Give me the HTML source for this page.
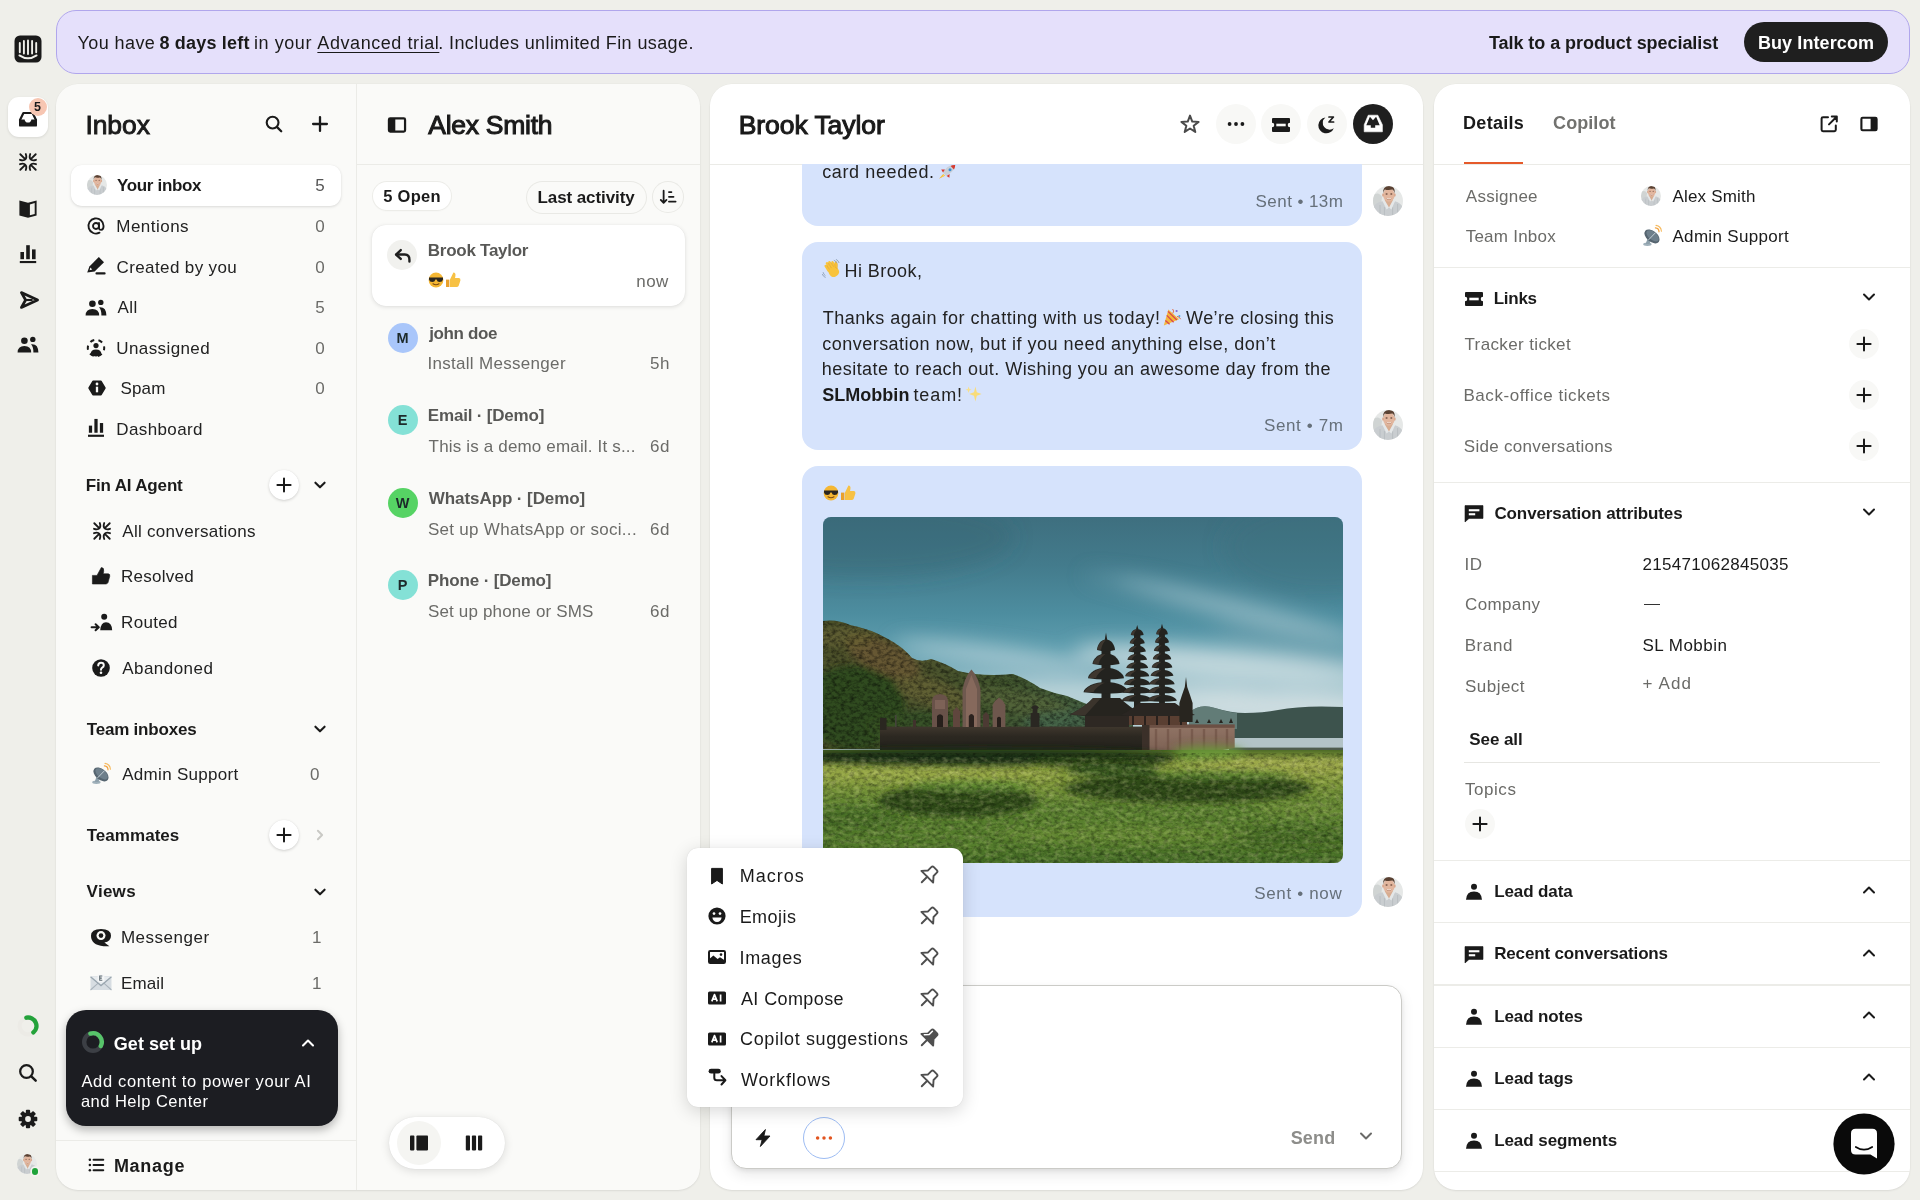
<!DOCTYPE html>
<html lang="en"><head><meta charset="utf-8"><title>Inbox</title>
<style>
html,body{margin:0;padding:0}
body{width:1920px;height:1200px;overflow:hidden;background:#efefea;font-family:"Liberation Sans",sans-serif;position:relative;color:#1a1a1a}
.a{position:absolute;display:block;overflow:visible}
.t{position:absolute;white-space:nowrap;line-height:24px;height:24px}
u{text-decoration-thickness:1.3px;text-underline-offset:2.5px}
svg.a{overflow:hidden}
#root{position:absolute;left:0;top:0;width:1920px;height:1200px;will-change:transform}
</style></head>
<body>
<div id="root">
<div class="a" style="left:55.6px;top:9.8px;width:1854.4px;height:63.8px;background:#e5e0fb;border-radius:20px;border:1.7px solid #b0a6ec;box-sizing:border-box"></div>
<div class="t" style="left:77.51px;top:31px;font-size:18px;letter-spacing:0.422px;">You have</div>
<div class="t" style="left:159.41px;top:31px;font-size:18px;font-weight:700;letter-spacing:0.204px;">8 days left</div>
<div class="t" style="left:253.89px;top:31px;font-size:18px;letter-spacing:0.586px;">in your</div>
<div class="t" style="left:317.37px;top:31px;font-size:18px;letter-spacing:0.565px;"><u>Advanced trial</u></div>
<div class="t" style="left:438.21px;top:31px;font-size:18px;letter-spacing:0.404px;">. Includes unlimited Fin usage.</div>
<div class="t" style="left:1488.89px;top:31px;font-size:18px;font-weight:700;letter-spacing:-0.051px;">Talk to a product specialist</div>
<div class="a" style="left:1744px;top:22px;width:144px;height:40px;background:#1f1f1f;border-radius:20px;"></div>
<div class="t" style="left:1757.89px;top:31px;font-size:18px;font-weight:700;color:#fff;letter-spacing:0.101px;">Buy Intercom</div>
<svg class="a" style="left:14.00px;top:35.00px" width="28" height="28" viewBox="-14.000 -14.000 28.000 28.000" ><rect x="-13.5" y="-13.5" width="27" height="27" rx="5.5" fill="#1a1a1a"/><path d="M-8.2 -6V3.2M-4.1 -8V4.6M0 -8.6V5M4.1 -8V4.6M8.2 -6V3.2" stroke="#efefea" stroke-width="1.9" stroke-linecap="round"/><path d="M-8.6 6.4Q0 12.2 8.6 6.4" stroke="#efefea" stroke-width="1.9" fill="none" stroke-linecap="round"/></svg>
<div class="a" style="left:8px;top:97px;width:40px;height:40px;background:#fff;border-radius:11px;box-shadow:0 1px 3px rgba(0,0,0,.10)"></div>
<svg class="a" style="left:16.50px;top:108.50px" width="22" height="20" viewBox="-11.000 -10.000 22.000 20.000" ><path d="M-8 1L-4.6 -6H4.6L8 1" stroke="#1a1a1a" stroke-width="2.2" fill="none" stroke-linejoin="round" stroke-linecap="round"/><path d="M-9 0.5H-3.4Q-3 3.6 0 3.6Q3 3.6 3.4 0.5H9V6.4Q9 7.6 7.8 7.6H-7.8Q-9 7.6 -9 6.4Z" fill="#1a1a1a"/></svg>
<div class="a" style="left:29px;top:98px;width:18px;height:18px;background:#f7c6b2;border-radius:9px;"></div>
<div class="t" style="left:33.97px;top:95px;font-size:12.5px;font-weight:700;">5</div>
<svg class="a" style="left:17.00px;top:151.20px" width="22" height="22" viewBox="-11.828 -11.828 23.656 23.656" ><path d="M8.3 8.3L3.0 3.0M2.4 8.6Q0.9 4.4 3.2 2.7M8.6 2.4Q4.4 0.9 2.7 3.2M8.3 -8.3L3.0 -3.0M2.4 -8.6Q0.9 -4.4 3.2 -2.7M8.6 -2.4Q4.4 -0.9 2.7 -3.2M-8.3 8.3L-3.0 3.0M-2.4 8.6Q-0.9 4.4 -3.2 2.7M-8.6 2.4Q-4.4 0.9 -2.7 3.2M-8.3 -8.3L-3.0 -3.0M-2.4 -8.6Q-0.9 -4.4 -3.2 -2.7M-8.6 -2.4Q-4.4 -0.9 -2.7 -3.2" stroke="#1a1a1a" stroke-width="2.0" fill="none" stroke-linecap="round" stroke-linejoin="round"/></svg>
<svg class="a" style="left:17.00px;top:197.50px" width="22" height="22" viewBox="-11.000 -11.000 22.000 22.000" ><path d="M0 -6.2L8.6 -8.6V6.4L0 8.8Z" fill="#1a1a1a"/><path d="M0 -6.2L-8.6 -8.6V6.4L0 8.8Z" fill="#1a1a1a"/><path d="M1.9 -4.6L6.7 -6V4.9L1.9 6.3Z" fill="#efefea"/></svg>
<svg class="a" style="left:17.00px;top:243.00px" width="22" height="22" viewBox="-11.000 -11.000 22.000 22.000" ><rect x="-7.6" y="-2" width="3.6" height="7.2" fill="#1a1a1a"/><rect x="-1.8" y="-8.8" width="3.6" height="14" fill="#1a1a1a"/><rect x="4" y="-4.6" width="3.6" height="9.8" fill="#1a1a1a"/><rect x="-8.2" y="7" width="16.4" height="2.1" fill="#1a1a1a"/></svg>
<svg class="a" style="left:17.50px;top:288.50px" width="22" height="22" viewBox="-11.000 -11.000 22.000 22.000" ><path d="M-7.6 -7.4L8.6 0L-7.6 7.4L-3.4 0Z" stroke="#1a1a1a" stroke-width="2.7" fill="none" stroke-linejoin="round"/><path d="M-3 0H3.6" stroke="#1a1a1a" stroke-width="2.1"/></svg>
<svg class="a" style="left:16.00px;top:335.00px" width="24" height="20" viewBox="-12.000 -10.000 24.000 20.000" ><circle cx="-3.6" cy="-4.2" r="3.3" fill="#1a1a1a"/><path d="M-10.4 7.6Q-10.4 1 -3.6 1Q3.2 1 3.2 7.6Z" fill="#1a1a1a"/><circle cx="4.8" cy="-5.6" r="2.7" fill="#1a1a1a"/><path d="M3 -0.8Q10.4 -1.6 10.4 7.6H5.4Q5.6 2 3 -0.8Z" fill="#1a1a1a"/></svg>
<svg class="a" style="left:15.40px;top:1013.00px" width="26" height="26" viewBox="-13.000 -13.000 26.000 26.000" ><circle r="8.4" stroke="#ecebe6" stroke-width="4.2" fill="none"/><path d="M-1.6 -8.3A8.4 8.4 0 0 1 5.4 6.4" stroke="#23a23a" stroke-width="4.4" fill="none" stroke-linecap="round"/></svg>
<svg class="a" style="left:16.90px;top:1062.20px" width="22" height="22" viewBox="-10.280 -10.280 20.561 20.561" ><circle cx="-1.4" cy="-1.4" r="5.9" stroke="#1a1a1a" stroke-width="2.1" fill="none"/><path d="M3.1 3.1L7.2 7.2" stroke="#1a1a1a" stroke-width="2.3" stroke-linecap="round"/></svg>
<svg class="a" style="left:16.90px;top:1108.20px" width="22" height="22" viewBox="-11.828 -11.828 23.656 23.656" ><rect x="-2.3" y="-10" width="4.6" height="5" rx="1" transform="rotate(0)" fill="#1a1a1a"/><rect x="-2.3" y="-10" width="4.6" height="5" rx="1" transform="rotate(45)" fill="#1a1a1a"/><rect x="-2.3" y="-10" width="4.6" height="5" rx="1" transform="rotate(90)" fill="#1a1a1a"/><rect x="-2.3" y="-10" width="4.6" height="5" rx="1" transform="rotate(135)" fill="#1a1a1a"/><rect x="-2.3" y="-10" width="4.6" height="5" rx="1" transform="rotate(180)" fill="#1a1a1a"/><rect x="-2.3" y="-10" width="4.6" height="5" rx="1" transform="rotate(225)" fill="#1a1a1a"/><rect x="-2.3" y="-10" width="4.6" height="5" rx="1" transform="rotate(270)" fill="#1a1a1a"/><rect x="-2.3" y="-10" width="4.6" height="5" rx="1" transform="rotate(315)" fill="#1a1a1a"/><circle r="7.2" fill="#1a1a1a"/><circle r="3.1" fill="#efefea"/></svg>
<svg class="a" style="left:17.40px;top:1154.20px" width="20" height="20" viewBox="-10.000 -10.000 20.000 20.000" ><defs><clipPath id="fa0"><circle r="10"/></clipPath></defs><g clip-path="url(#fa0)"><g transform="scale(0.6666666666666666)"><rect x="-15" y="-15" width="30" height="30" fill="#e6e8e7"/><path d="M-15 -6Q-9 -10 -6 -4L-7 4L-15 8Z" fill="#d0d4d3"/><path d="M-15 16V6Q-12 1.4 -5.4 0.2L1 6.4L7 0.2Q13 1.6 15 7V16Z" fill="#c9cdd0"/><path d="M-8 16V4M-3.6 16V6M4.6 16V6M9.6 16V3" stroke="#b4babd" stroke-width="1" opacity=".8"/><path d="M-3.4 -1.6H4.8L5.4 1.4L1 7L-3.6 1.4Z" fill="#d7ad92"/><path d="M-5.4 0.2L-3.4 -1L1 6.6L-1.4 8.4ZM7 0.2L5 -1L1 6.6L3.4 8.4Z" fill="#e4e7e8"/><ellipse cx="0.9" cy="-6" rx="5.7" ry="6.7" fill="#e2b69e"/><ellipse cx="-4.9" cy="-6" rx="1" ry="1.7" fill="#d9a88f"/><ellipse cx="6.7" cy="-6" rx="1" ry="1.7" fill="#d9a88f"/><path d="M-4.9 -7.4Q-5.6 -15 1.2 -15Q7.6 -15 6.7 -7.4Q6 -10.8 4.4 -11.4Q0 -10.4 -3.2 -11.6Q-4.4 -10.4 -4.9 -7.4Z" fill="#5a4132"/><ellipse cx="-1.4" cy="-7" rx="1.1" ry=".7" fill="#6a4a3c"/><ellipse cx="3.3" cy="-7" rx="1.1" ry=".7" fill="#6a4a3c"/><path d="M-1.9 -3Q1 -0.6 3.9 -3Q3.2 -1 1 -0.9Q-1.2 -1 -1.9 -3Z" fill="#b78570"/><path d="M-1.2 -2.7Q1 -1.6 3.2 -2.7" stroke="#f3e6df" stroke-width=".7" fill="none"/></g></g></svg>
<div class="a" style="left:31.900000000000002px;top:1168.3px;width:6.6px;height:6.6px;background:#1fa33a;border-radius:3.3px;box-shadow:0 0 0 1.7px #f4f4f0"></div>
<div class="a" style="left:56px;top:84px;width:643.6px;height:1106px;background:#fafaf8;border-radius:22px;box-shadow:0 1px 2px rgba(0,0,0,.08),0 0 0 .5px rgba(0,0,0,.03)"></div>
<div class="a" style="left:355.5px;top:84px;width:1px;height:1106px;background:#ebebe7;border-radius:0px;"></div>
<div class="a" style="left:356px;top:163.5px;width:344px;height:1px;background:#ebebe7;border-radius:0px;"></div>
<div class="t" style="left:85.45px;top:113px;font-size:26.5px;font-weight:500;letter-spacing:-0.086px;-webkit-text-stroke:.9px #1a1a1a;">Inbox</div>
<svg class="a" style="left:263.40px;top:113.40px" width="22" height="22" viewBox="-11.000 -11.000 22.000 22.000" ><circle cx="-1.4" cy="-1.4" r="5.9" stroke="#1a1a1a" stroke-width="2.1" fill="none"/><path d="M3.1 3.1L7.2 7.2" stroke="#1a1a1a" stroke-width="2.3" stroke-linecap="round"/></svg>
<svg class="a" style="left:309.00px;top:113.20px" width="22" height="22" viewBox="-11.000 -11.000 22.000 22.000" ><path d="M-6.9 0H6.9M0 -6.9V6.9" stroke="#1a1a1a" stroke-width="2.3" fill="none" stroke-linecap="round"/></svg>
<div class="a" style="left:71px;top:164.5px;width:269.5px;height:41px;background:#fff;border-radius:11px;box-shadow:0 1px 3px rgba(0,0,0,.13),0 0 1px rgba(0,0,0,.08)"></div>
<svg class="a" style="left:86.50px;top:175.30px" width="20" height="20" viewBox="-10.000 -10.000 20.000 20.000" ><defs><clipPath id="fa1"><circle r="10"/></clipPath></defs><g clip-path="url(#fa1)"><g transform="scale(0.6666666666666666)"><rect x="-15" y="-15" width="30" height="30" fill="#e6e8e7"/><path d="M-15 -6Q-9 -10 -6 -4L-7 4L-15 8Z" fill="#d0d4d3"/><path d="M-15 16V6Q-12 1.4 -5.4 0.2L1 6.4L7 0.2Q13 1.6 15 7V16Z" fill="#c9cdd0"/><path d="M-8 16V4M-3.6 16V6M4.6 16V6M9.6 16V3" stroke="#b4babd" stroke-width="1" opacity=".8"/><path d="M-3.4 -1.6H4.8L5.4 1.4L1 7L-3.6 1.4Z" fill="#d7ad92"/><path d="M-5.4 0.2L-3.4 -1L1 6.6L-1.4 8.4ZM7 0.2L5 -1L1 6.6L3.4 8.4Z" fill="#e4e7e8"/><ellipse cx="0.9" cy="-6" rx="5.7" ry="6.7" fill="#e2b69e"/><ellipse cx="-4.9" cy="-6" rx="1" ry="1.7" fill="#d9a88f"/><ellipse cx="6.7" cy="-6" rx="1" ry="1.7" fill="#d9a88f"/><path d="M-4.9 -7.4Q-5.6 -15 1.2 -15Q7.6 -15 6.7 -7.4Q6 -10.8 4.4 -11.4Q0 -10.4 -3.2 -11.6Q-4.4 -10.4 -4.9 -7.4Z" fill="#5a4132"/><ellipse cx="-1.4" cy="-7" rx="1.1" ry=".7" fill="#6a4a3c"/><ellipse cx="3.3" cy="-7" rx="1.1" ry=".7" fill="#6a4a3c"/><path d="M-1.9 -3Q1 -0.6 3.9 -3Q3.2 -1 1 -0.9Q-1.2 -1 -1.9 -3Z" fill="#b78570"/><path d="M-1.2 -2.7Q1 -1.6 3.2 -2.7" stroke="#f3e6df" stroke-width=".7" fill="none"/></g></g></svg>
<div class="t" style="left:117.06px;top:174px;font-size:17px;font-weight:700;letter-spacing:-0.340px;">Your inbox</div>
<div class="t" style="right:1595.40px;top:174px;font-size:17px;color:#555;">5</div>
<div class="t" style="left:116.29px;top:215px;font-size:17px;color:#222;letter-spacing:0.474px;">Mentions</div>
<div class="t" style="right:1595.40px;top:215px;font-size:17px;color:#6b6b68;">0</div>
<div class="t" style="left:116.60px;top:256px;font-size:17px;color:#222;letter-spacing:0.377px;">Created by you</div>
<div class="t" style="right:1595.40px;top:256px;font-size:17px;color:#6b6b68;">0</div>
<div class="t" style="left:117.46px;top:296px;font-size:17px;color:#222;letter-spacing:0.413px;">All</div>
<div class="t" style="right:1595.40px;top:296px;font-size:17px;color:#6b6b68;">5</div>
<div class="t" style="left:116.37px;top:337px;font-size:17px;color:#222;letter-spacing:0.388px;">Unassigned</div>
<div class="t" style="right:1595.40px;top:337px;font-size:17px;color:#6b6b68;">0</div>
<div class="t" style="left:120.50px;top:377px;font-size:17px;color:#222;letter-spacing:0.154px;">Spam</div>
<div class="t" style="right:1595.40px;top:377px;font-size:17px;color:#6b6b68;">0</div>
<div class="t" style="left:116.29px;top:418px;font-size:17px;color:#222;letter-spacing:0.377px;">Dashboard</div>
<svg class="a" style="left:85.40px;top:214.80px" width="22" height="22" viewBox="-12.500 -12.500 25.000 25.000" ><circle r="3.4" stroke="#1a1a1a" stroke-width="2.1" fill="none"/><path d="M3.4 -3.6V2Q3.4 4.4 5.8 4.4Q8.6 4.4 8.6 0A8.6 8.6 0 1 0 4 7.6" stroke="#1a1a1a" stroke-width="2.1" fill="none" stroke-linecap="round"/></svg>
<svg class="a" style="left:85.30px;top:255.00px" width="22" height="22" viewBox="-11.000 -11.000 22.000 22.000" ><path d="M-8.8 6.6L-6.6 0.4L2.8 -9L8 -3.8L-1.4 5.6Z" fill="#1a1a1a"/><path d="M-5.6 1.6L-6.4 4.2L-3.8 3.4Z" fill="#fafaf8"/><path d="M0.5 7.4H8.6" stroke="#1a1a1a" stroke-width="2.1" stroke-linecap="round"/></svg>
<svg class="a" style="left:84.30px;top:297.60px" width="24" height="20" viewBox="-12.000 -10.000 24.000 20.000" ><circle cx="-3.6" cy="-4.2" r="3.3" fill="#1a1a1a"/><path d="M-10.4 7.6Q-10.4 1 -3.6 1Q3.2 1 3.2 7.6Z" fill="#1a1a1a"/><circle cx="4.8" cy="-5.6" r="2.7" fill="#1a1a1a"/><path d="M3 -0.8Q10.4 -1.6 10.4 7.6H5.4Q5.6 2 3 -0.8Z" fill="#1a1a1a"/></svg>
<svg class="a" style="left:85.30px;top:336.80px" width="22" height="22" viewBox="-11.000 -11.000 22.000 22.000" ><circle r="8.2" stroke="#1a1a1a" stroke-width="2" fill="none" stroke-dasharray="4.3 4.3" stroke-dashoffset="2.1"/><circle cx="0" cy="-2.4" r="2.6" fill="#1a1a1a"/><path d="M-5.4 6.6Q-5.4 1.6 0 1.6Q5.4 1.6 5.4 6.6Q0 10.4 -5.4 6.6Z" fill="#1a1a1a"/></svg>
<svg class="a" style="left:85.60px;top:376.60px" width="22" height="22" viewBox="-11.000 -11.000 22.000 22.000" ><path d="M-4 -6.6H4L7.9 0L4 6.6H-4L-7.9 0Z" fill="#1a1a1a" stroke="#1a1a1a" stroke-width="1.6" stroke-linejoin="round"/><rect x="-1.15" y="-1.3" width="2.3" height="5.6" fill="#fafaf8"/><circle cx="0" cy="-4" r="1.4" fill="#fafaf8"/></svg>
<svg class="a" style="left:85.40px;top:416.80px" width="22" height="22" viewBox="-10.185 -10.185 20.370 20.370" ><rect x="-6.6" y="-2.2" width="3" height="6.6" fill="#1a1a1a"/><rect x="-1.5" y="-8.4" width="3" height="12.8" fill="#1a1a1a"/><rect x="3.6" y="-4.6" width="3" height="9" fill="#1a1a1a"/><rect x="-7.4" y="6.2" width="14.8" height="2" fill="#1a1a1a"/></svg>
<div class="t" style="left:85.77px;top:474px;font-size:17px;font-weight:700;letter-spacing:-0.168px;">Fin AI Agent</div>
<div class="a" style="left:269.2px;top:470px;width:30px;height:30px;background:#fff;border-radius:15px;box-shadow:0 1px 3px rgba(0,0,0,.16),0 0 1px rgba(0,0,0,.1)"></div>
<svg class="a" style="left:274.20px;top:475.00px" width="20" height="20" viewBox="-10.000 -10.000 20.000 20.000" ><path d="M-6.6 0H6.6M0 -6.6V6.6" stroke="#1a1a1a" stroke-width="2" fill="none" stroke-linecap="round"/></svg>
<svg class="a" style="left:311.80px;top:477.30px" width="16" height="16" viewBox="-8.000 -8.000 16.000 16.000" ><path d="M-4.6 -2.3L0 2.3L4.6 -2.3" stroke="#1a1a1a" stroke-width="2.1" fill="none" stroke-linecap="round" stroke-linejoin="round"/></svg>
<div class="t" style="left:122.26px;top:520px;font-size:17px;color:#222;letter-spacing:0.299px;">All conversations</div>
<div class="t" style="left:121.09px;top:565px;font-size:17px;color:#222;letter-spacing:0.242px;">Resolved</div>
<div class="t" style="left:121.09px;top:611px;font-size:17px;color:#222;letter-spacing:0.295px;">Routed</div>
<div class="t" style="left:122.26px;top:657px;font-size:17px;color:#222;letter-spacing:0.453px;">Abandoned</div>
<svg class="a" style="left:90.70px;top:519.80px" width="22" height="22" viewBox="-11.828 -11.828 23.656 23.656" ><path d="M8.3 8.3L3.0 3.0M2.4 8.6Q0.9 4.4 3.2 2.7M8.6 2.4Q4.4 0.9 2.7 3.2M8.3 -8.3L3.0 -3.0M2.4 -8.6Q0.9 -4.4 3.2 -2.7M8.6 -2.4Q4.4 -0.9 2.7 -3.2M-8.3 8.3L-3.0 3.0M-2.4 8.6Q-0.9 4.4 -3.2 2.7M-8.6 2.4Q-4.4 0.9 -2.7 3.2M-8.3 -8.3L-3.0 -3.0M-2.4 -8.6Q-0.9 -4.4 -3.2 -2.7M-8.6 -2.4Q-4.4 -0.9 -2.7 -3.2" stroke="#1a1a1a" stroke-width="2.0" fill="none" stroke-linecap="round" stroke-linejoin="round"/></svg>
<svg class="a" style="left:90.40px;top:565.00px" width="22" height="22" viewBox="-11.000 -11.000 22.000 22.000" ><path d="M-8.6 -0.6H-4L0.3 -8.5Q3.3 -8.4 2.7 -4.6L2.2 -2.2H7.2Q9.3 -2 8.7 0.5L7 6.6Q6.4 8 4.8 8H-8.6Z" fill="#1a1a1a" stroke="#1a1a1a" stroke-width=".6" stroke-linejoin="round"/></svg>
<svg class="a" style="left:89.70px;top:611.50px" width="24" height="22" viewBox="-12.000 -11.000 24.000 22.000" ><circle cx="2.2" cy="-6.3" r="3" fill="#1a1a1a"/><path d="M-1.8 7.2Q-1.2 -0.8 4 -0.8Q9.8 -0.8 10.2 7.2Z" fill="#1a1a1a"/><path d="M-10.4 4.2H-3.6M-6.4 1.2L-3.2 4.2L-6.4 7.2" stroke="#1a1a1a" stroke-width="2" fill="none" stroke-linecap="round" stroke-linejoin="round"/></svg>
<svg class="a" style="left:90.20px;top:657.00px" width="22" height="22" viewBox="-11.000 -11.000 22.000 22.000" ><circle r="8.8" fill="#1a1a1a"/><path d="M-2.8 -2.6Q-2.6 -5.2 0 -5.2Q2.8 -5.2 2.8 -2.8Q2.8 -1.2 1.2 -0.4Q0 0.3 0 1.8" stroke="#fafaf8" stroke-width="2" fill="none" stroke-linecap="round"/><circle cx="0" cy="4.8" r="1.3" fill="#fafaf8"/></svg>
<div class="t" style="left:86.71px;top:718px;font-size:17px;font-weight:700;letter-spacing:-0.198px;">Team inboxes</div>
<svg class="a" style="left:311.80px;top:721.10px" width="16" height="16" viewBox="-8.000 -8.000 16.000 16.000" ><path d="M-4.6 -2.3L0 2.3L4.6 -2.3" stroke="#1a1a1a" stroke-width="2.1" fill="none" stroke-linecap="round" stroke-linejoin="round"/></svg>
<svg class="a" style="left:89.20px;top:761.00px" width="24" height="26" viewBox="-12.000 -13.000 24.000 26.000" ><ellipse cx="-4.6" cy="8.2" rx="4.2" ry="1.7" fill="#9fb0ba"/><path d="M-6.4 8L-4.4 2.4L-1 4.6L-2.6 8Z" fill="#8ea0ab"/><ellipse cx="0" cy="0.4" rx="8.8" ry="5.4" transform="rotate(40 0 0.4)" fill="#55646f"/><ellipse cx="0.6" cy="-0.2" rx="7.4" ry="4" transform="rotate(40 0.6 -0.2)" fill="#6e7f8b"/><path d="M-3.2 3.6L3.6 -3.4" stroke="#c3ced5" stroke-width="1" stroke-linecap="round"/><path d="M3.4 -8.2A4 4 0 0 1 7 -4.2" stroke="#f2a03a" stroke-width="1.2" fill="none" stroke-linecap="round"/><path d="M4 -10.6A6.4 6.4 0 0 1 9.4 -4.8" stroke="#f6b95c" stroke-width="1.1" fill="none" stroke-linecap="round"/></svg>
<div class="t" style="left:122.26px;top:763px;font-size:17px;color:#222;letter-spacing:0.286px;">Admin Support</div>
<div class="t" style="left:309.92px;top:763px;font-size:17px;color:#6b6b68;">0</div>
<div class="t" style="left:86.71px;top:824px;font-size:17px;font-weight:700;letter-spacing:0.040px;">Teammates</div>
<div class="a" style="left:269.2px;top:820px;width:30px;height:30px;background:#fff;border-radius:15px;box-shadow:0 1px 3px rgba(0,0,0,.16),0 0 1px rgba(0,0,0,.1)"></div>
<svg class="a" style="left:274.20px;top:825.00px" width="20" height="20" viewBox="-10.000 -10.000 20.000 20.000" ><path d="M-6.6 0H6.6M0 -6.6V6.6" stroke="#1a1a1a" stroke-width="2" fill="none" stroke-linecap="round"/></svg>
<svg class="a" style="left:311.80px;top:827.00px" width="16" height="16" viewBox="-8.000 -8.000 16.000 16.000" ><path d="M-2.1 -4.2L2.1 0L-2.1 4.2" stroke="#c9c9c5" stroke-width="2" fill="none" stroke-linecap="round" stroke-linejoin="round"/></svg>
<div class="t" style="left:86.59px;top:880px;font-size:17px;font-weight:700;letter-spacing:0.279px;">Views</div>
<svg class="a" style="left:311.80px;top:883.50px" width="16" height="16" viewBox="-8.000 -8.000 16.000 16.000" ><path d="M-4.6 -2.3L0 2.3L4.6 -2.3" stroke="#1a1a1a" stroke-width="2.1" fill="none" stroke-linecap="round" stroke-linejoin="round"/></svg>
<svg class="a" style="left:89.20px;top:926.40px" width="24" height="22" viewBox="-12.000 -11.000 24.000 22.000" ><path d="M-10 -1.2Q-10 -8 0 -8Q10 -8 10 -1.2Q10 4.6 3.4 5.4L8.4 9.2H2.6Q-10 8 -10 -1.2Z" fill="#1a1a1a"/><circle cx="0" cy="-1.4" r="4.5" fill="#fafaf8"/><circle cx="0" cy="-1.4" r="2.3" fill="#1a1a1a"/></svg>
<div class="t" style="left:120.89px;top:926px;font-size:17px;color:#222;letter-spacing:0.518px;">Messenger</div>
<div class="t" style="left:311.99px;top:926px;font-size:17px;color:#6b6b68;">1</div>
<svg class="a" style="left:89.20px;top:972.60px" width="24" height="20" viewBox="-12.000 -10.000 24.000 20.000" ><rect x="-10.5" y="-6.8" width="21" height="13.8" rx="1.6" fill="#d7dde2"/><path d="M-10.5 7L-2 -0.6M10.5 7L2 -0.6" stroke="#aab4bc" stroke-width="1.1" fill="none"/><path d="M-10.5 -6.2L0 2.6L10.5 -6.2" stroke="#9aa6af" stroke-width="1.3" fill="#e8ecef"/><rect x="-3.3" y="-8.4" width="6.6" height="7.2" fill="#f4f6f7"/><path d="M1.3 -7H-1.3V-2.8H1.3M-1.3 -4.9H0.8" stroke="#5d6972" stroke-width="1.05" fill="none"/></svg>
<div class="t" style="left:120.89px;top:972px;font-size:17px;color:#222;letter-spacing:0.168px;">Email</div>
<div class="t" style="left:311.99px;top:972px;font-size:17px;color:#6b6b68;">1</div>
<div class="a" style="left:66px;top:1010.4px;width:271.6px;height:115.6px;background:#1c1d22;border-radius:20px;box-shadow:0 4px 10px rgba(0,0,0,.28)"></div>
<svg class="a" style="left:79.60px;top:1028.80px" width="26" height="26" viewBox="-13.000 -13.000 26.000 26.000" ><circle r="8.8" stroke="#3c3f45" stroke-width="4.4" fill="none"/><path d="M-2.6 -8.4A8.8 8.8 0 0 1 7.8 4" stroke="#57c46a" stroke-width="4.4" fill="none" stroke-linecap="round"/></svg>
<div class="t" style="left:113.87px;top:1032px;font-size:18px;font-weight:700;color:#fff;letter-spacing:0.012px;">Get set up</div>
<svg class="a" style="left:299.40px;top:1034.00px" width="18" height="18" viewBox="-9.000 -9.000 18.000 18.000" ><path d="M-5 2.5L0 -2.5L5 2.5" stroke="#fff" stroke-width="2.1" fill="none" stroke-linecap="round" stroke-linejoin="round"/></svg>
<div class="t" style="left:81.47px;top:1069px;font-size:16.5px;color:#fff;letter-spacing:0.644px;">Add content to power your AI</div>
<div class="t" style="left:80.89px;top:1089px;font-size:16.5px;color:#fff;letter-spacing:0.493px;">and Help Center</div>
<div class="a" style="left:56px;top:1139.5px;width:299.5px;height:1px;background:#ebebe7;border-radius:0px;"></div>
<svg class="a" style="left:85.20px;top:1155.00px" width="22" height="20" viewBox="-11.828 -10.753 23.656 21.505" ><circle cx="-6.6" cy="-5.6" r="1.35" fill="#1a1a1a"/><path d="M-2.6 -5.6H7.8" stroke="#1a1a1a" stroke-width="2.2" stroke-linecap="round"/><circle cx="-6.6" cy="0" r="1.35" fill="#1a1a1a"/><path d="M-2.6 0H7.8" stroke="#1a1a1a" stroke-width="2.2" stroke-linecap="round"/><circle cx="-6.6" cy="5.6" r="1.35" fill="#1a1a1a"/><path d="M-2.6 5.6H7.8" stroke="#1a1a1a" stroke-width="2.2" stroke-linecap="round"/></svg>
<div class="t" style="left:113.89px;top:1154px;font-size:18px;font-weight:700;letter-spacing:0.702px;">Manage</div>
<svg class="a" style="left:386.30px;top:114.60px" width="22" height="20" viewBox="-10.377 -9.434 20.755 18.868" ><rect x="-7.6" y="-6.2" width="15.2" height="12.4" rx="1.2" stroke="#1a1a1a" stroke-width="2.1" fill="none"/><rect x="-7.6" y="-6.2" width="6" height="12.4" fill="#1a1a1a"/></svg>
<div class="t" style="left:428.33px;top:113px;font-size:26.5px;letter-spacing:-0.276px;-webkit-text-stroke:1.05px #1a1a1a;">Alex Smith</div>
<div class="a" style="left:372.5px;top:181.5px;width:78.5px;height:28.5px;background:#fff;border-radius:15px;box-shadow:0 0 0 1px #ecece8,0 1px 2px rgba(0,0,0,.05)"></div>
<div class="t" style="left:383.17px;top:184px;font-size:16.5px;font-weight:700;letter-spacing:0.305px;">5 Open</div>
<div class="a" style="left:526.5px;top:181.5px;width:119px;height:31.5px;background:#fafaf8;border-radius:16px;box-shadow:0 0 0 1px #e9e9e5"></div>
<div class="t" style="left:537.57px;top:186px;font-size:17px;font-weight:700;letter-spacing:-0.097px;">Last activity</div>
<div class="a" style="left:653.2px;top:182.2px;width:29.6px;height:29.6px;background:#fafaf8;border-radius:14.8px;box-shadow:0 0 0 1px #e9e9e5"></div>
<svg class="a" style="left:658.00px;top:187.00px" width="20" height="20" viewBox="-10.526 -10.526 21.053 21.053" ><path d="M-4.6 -6.6V6M-7.6 3L-4.6 6.2L-1.6 3" stroke="#1a1a1a" stroke-width="1.9" fill="none" stroke-linecap="round" stroke-linejoin="round"/><path d="M1 -5.2H3.6M1 -0.2H5.8M1 4.8H8" stroke="#1a1a1a" stroke-width="1.9" stroke-linecap="round"/></svg>
<div class="a" style="left:371.5px;top:224.6px;width:313.2px;height:81.2px;background:#fff;border-radius:14px;box-shadow:0 1px 4px rgba(0,0,0,.12),0 0 1px rgba(0,0,0,.1)"></div>
<div class="a" style="left:387.3px;top:240.3px;width:30px;height:30px;background:#f1f1ee;border-radius:15px;"></div>
<svg class="a" style="left:392.90px;top:245.60px" width="20" height="20" viewBox="-10.870 -10.870 21.739 21.739" ><path d="M-2.4 -6.4L-7.6 -1.6L-2.4 3.2" stroke="#1f1f1f" stroke-width="2.6" fill="none" stroke-linecap="round" stroke-linejoin="round"/><path d="M-7 -1.6H2Q7 -1.6 7 4.2V6" stroke="#1f1f1f" stroke-width="2.6" fill="none" stroke-linecap="round"/></svg>
<div class="t" style="left:427.87px;top:239px;font-size:17px;font-weight:700;color:#585856;letter-spacing:-0.270px;">Brook Taylor</div>
<div class="t" style="left:636.21px;top:270px;font-size:17px;color:#6b6b68;letter-spacing:0.500px;">now</div>
<div class="t" style="left:429.20px;top:322px;font-size:17px;font-weight:700;color:#585856;letter-spacing:-0.357px;">john doe</div>
<div class="t" style="left:427.39px;top:352px;font-size:17px;color:#6b6b68;letter-spacing:0.309px;">Install Messenger</div>
<div class="t" style="left:649.95px;top:352px;font-size:17px;color:#6b6b68;letter-spacing:0.500px;">5h</div>
<div class="t" style="left:427.87px;top:404px;font-size:17px;font-weight:700;color:#585856;letter-spacing:-0.197px;">Email · [Demo]</div>
<div class="t" style="left:428.60px;top:435px;font-size:17px;color:#6b6b68;letter-spacing:0.166px;">This is a demo email. It s...</div>
<div class="t" style="left:649.98px;top:435px;font-size:17px;color:#6b6b68;letter-spacing:0.500px;">6d</div>
<div class="t" style="left:428.86px;top:487px;font-size:17px;font-weight:700;color:#585856;letter-spacing:-0.084px;">WhatsApp · [Demo]</div>
<div class="t" style="left:427.90px;top:518px;font-size:17px;color:#6b6b68;letter-spacing:0.298px;">Set up WhatsApp or soci...</div>
<div class="t" style="left:649.98px;top:518px;font-size:17px;color:#6b6b68;letter-spacing:0.500px;">6d</div>
<div class="t" style="left:427.87px;top:569px;font-size:17px;font-weight:700;color:#585856;letter-spacing:-0.150px;">Phone · [Demo]</div>
<div class="t" style="left:427.90px;top:600px;font-size:17px;color:#6b6b68;letter-spacing:0.163px;">Set up phone or SMS</div>
<div class="t" style="left:649.98px;top:600px;font-size:17px;color:#6b6b68;letter-spacing:0.500px;">6d</div>
<div class="a" style="left:387.6px;top:322.5px;width:30px;height:30px;background:#a9c6fa;border-radius:15px;"></div>
<div class="t" style="left:387.6px;width:30px;text-align:center;top:325.9px;font-size:14.5px;font-weight:700;color:#1d2a2a">M</div>
<div class="a" style="left:387.6px;top:405px;width:30px;height:30px;background:#84e1d6;border-radius:15px;"></div>
<div class="t" style="left:387.6px;width:30px;text-align:center;top:408.4px;font-size:14.5px;font-weight:700;color:#1d2a2a">E</div>
<div class="a" style="left:387.6px;top:487.6px;width:30px;height:30px;background:#56d364;border-radius:15px;"></div>
<div class="t" style="left:387.6px;width:30px;text-align:center;top:491.0px;font-size:14.5px;font-weight:700;color:#1d2a2a">W</div>
<div class="a" style="left:387.6px;top:570px;width:30px;height:30px;background:#84e1d6;border-radius:15px;"></div>
<div class="t" style="left:387.6px;width:30px;text-align:center;top:573.4px;font-size:14.5px;font-weight:700;color:#1d2a2a">P</div>
<div class="a" style="left:388.6px;top:1117px;width:116.8px;height:52px;background:#fff;border-radius:26px;box-shadow:0 2px 10px rgba(0,0,0,.12),0 0 1px rgba(0,0,0,.12)"></div>
<div class="a" style="left:396.5px;top:1120.8px;width:44px;height:44px;background:#f5f5f2;border-radius:22px;"></div>
<svg class="a" style="left:407.50px;top:1132.80px" width="22" height="20" viewBox="-11.000 -10.000 22.000 20.000" ><rect x="-9" y="-7.4" width="4.4" height="14.8" rx="0.8" fill="#1a1a1a"/><rect x="-2.6" y="-7.4" width="11.6" height="14.8" rx="0.8" fill="#1a1a1a"/></svg>
<svg class="a" style="left:463.00px;top:1132.80px" width="22" height="20" viewBox="-11.000 -10.000 22.000 20.000" ><rect x="-8.2" y="-7.4" width="4.2" height="14.8" rx="0.8" fill="#1a1a1a"/><rect x="-2.1" y="-7.4" width="4.2" height="14.8" rx="0.8" fill="#1a1a1a"/><rect x="4" y="-7.4" width="4.2" height="14.8" rx="0.8" fill="#1a1a1a"/></svg>
<div class="a" style="left:710px;top:84px;width:713.4px;height:1106px;background:#fff;border-radius:22px;box-shadow:0 1px 2px rgba(0,0,0,.08),0 0 0 .5px rgba(0,0,0,.03)"></div>
<div class="a" style="left:710px;top:163.5px;width:713.4px;height:1px;background:#ebebe7;border-radius:0px;"></div>
<div class="t" style="left:738.67px;top:113px;font-size:26.5px;letter-spacing:-0.059px;-webkit-text-stroke:1.05px #1a1a1a;">Brook Taylor</div>
<svg class="a" style="left:1178.80px;top:113.40px" width="22" height="22" viewBox="-10.000 -10.000 20.000 20.000" ><polygon points="0.00,-7.60 2.06,-2.23 7.80,-1.93 3.33,1.68 4.82,7.23 0.00,4.10 -4.82,7.23 -3.33,1.68 -7.80,-1.93 -2.06,-2.23" stroke="#4a4a4a" stroke-width="1.8" fill="none" stroke-linejoin="round"/></svg>
<div class="a" style="left:1215.6px;top:104.4px;width:40px;height:40px;background:#f8f8f6;border-radius:20px;"></div>
<svg class="a" style="left:1224.60px;top:119.40px" width="22" height="10" viewBox="-11.000 -5.000 22.000 10.000" ><circle cx="-6.4" cy="0" r="1.9" fill="#1a1a1a"/><circle cx="0" cy="0" r="1.9" fill="#1a1a1a"/><circle cx="6.4" cy="0" r="1.9" fill="#1a1a1a"/></svg>
<div class="a" style="left:1261px;top:104.4px;width:40px;height:40px;background:#f8f8f6;border-radius:20px;"></div>
<svg class="a" style="left:1270.20px;top:116.00px" width="22" height="18" viewBox="-11.000 -9.000 22.000 18.000" ><path d="M-8 -7H8Q9 -7 9 -6V-2.3A2.3 2.3 0 0 0 9 2.3V6Q9 7 8 7H-8Q-9 7 -9 6V2.3A2.3 2.3 0 0 0 -9 -2.3V-6Q-9 -7 -8 -7Z" fill="#1a1a1a"/><rect x="-4.7" y="-1.3" width="9.4" height="2.6" fill="#f8f8f6"/></svg>
<div class="a" style="left:1306.6px;top:104.4px;width:40px;height:40px;background:#f8f8f6;border-radius:20px;"></div>
<svg class="a" style="left:1315.20px;top:113.80px" width="22" height="22" viewBox="-11.000 -11.000 22.000 22.000" ><path d="M-0.6 -7.6A8 8 0 1 0 7.8 3.2A6.6 6.6 0 0 1 -0.6 -7.6Z" fill="#1a1a1a"/><path d="M3 -8H7.4L3 -3H7.6" stroke="#1a1a1a" stroke-width="1.7" fill="none" stroke-linecap="round" stroke-linejoin="round"/></svg>
<div class="a" style="left:1352.7px;top:104.2px;width:40px;height:40px;background:#1f1f1f;border-radius:20px;"></div>
<svg class="a" style="left:1361.70px;top:114.20px" width="22" height="20" viewBox="-11.000 -10.000 22.000 20.000" ><path d="M-4.75 -8.8H4.8L9.4 0.8V7.8H-8.8V0.8Z" fill="#fff" stroke="#fff" stroke-width="0.6" stroke-linejoin="round"/><path d="M-3.1 -7.3L0 -3.8L3.1 -7.3L6.7 1.2H2.2V3.7H-2.2V1.2H-6.7Z" fill="#1f1f1f"/></svg>
<div class="a" style="left:802px;top:150px;width:560px;height:76.2px;background:#d6e3fc;border-radius:16px;clip-path:inset(14px 0 0 0)"></div>
<div class="t" style="left:822.20px;top:160px;font-size:18px;color:#222;letter-spacing:0.617px;">card needed.</div>
<div class="t" style="left:1255.60px;top:190px;font-size:17px;color:#66707a;letter-spacing:0.429px;">Sent • 13m</div>
<div class="a" style="left:802px;top:242px;width:560px;height:208px;background:#d6e3fc;border-radius:16px;"></div>
<div class="t" style="left:844.58px;top:259px;font-size:18px;color:#222;letter-spacing:0.422px;">Hi Brook,</div>
<div class="t" style="left:822.67px;top:306px;font-size:18px;color:#222;letter-spacing:0.520px;">Thanks again for chatting with us today!</div>
<div class="t" style="left:1186.07px;top:306px;font-size:18px;color:#222;letter-spacing:0.407px;">We’re closing this</div>
<div class="t" style="left:822.20px;top:332px;font-size:18px;color:#222;letter-spacing:0.487px;">conversation now, but if you need anything else, don’t</div>
<div class="t" style="left:821.84px;top:357px;font-size:18px;color:#222;letter-spacing:0.447px;">hesitate to reach out. Wishing you an awesome day from the</div>
<div class="t" style="left:822.24px;top:383px;font-size:18px;font-weight:700;letter-spacing:0.025px;">SLMobbin</div>
<div class="t" style="left:913.43px;top:383px;font-size:18px;color:#222;letter-spacing:0.919px;">team!</div>
<div class="t" style="left:1264.00px;top:414px;font-size:17px;color:#66707a;letter-spacing:0.613px;">Sent • 7m</div>
<div class="a" style="left:802px;top:465.8px;width:560px;height:451.4px;background:#d6e3fc;border-radius:16px;"></div>
<svg class="a" style="left:823.3px;top:517.1px;border-radius:8px" width="520" height="346" viewBox="0 0 520 346"><defs>
<linearGradient id="sky" x1="0" y1="0" x2="0" y2="1"><stop offset="0" stop-color="#3e6f7f"/><stop offset="0.2" stop-color="#437b8c"/><stop offset="0.4" stop-color="#4d8d9f"/><stop offset="0.55" stop-color="#5e9dae"/><stop offset="0.7" stop-color="#86b5c2"/><stop offset="0.85" stop-color="#b5cfd6"/><stop offset="1" stop-color="#cadadd"/></linearGradient>
<linearGradient id="hill" x1="0" y1="0" x2="1" y2="0.35"><stop offset="0" stop-color="#4a5029"/><stop offset=".3" stop-color="#51532d"/><stop offset=".65" stop-color="#40542d"/><stop offset="1" stop-color="#466244"/></linearGradient>
<linearGradient id="grass" x1="0" y1="0" x2="0" y2="1"><stop offset="0" stop-color="#4c6a26"/><stop offset=".1" stop-color="#8c9f41"/><stop offset=".28" stop-color="#81993b"/><stop offset=".5" stop-color="#5c8230"/><stop offset=".8" stop-color="#527a2b"/><stop offset="1" stop-color="#456d26"/></linearGradient>
<linearGradient id="wall" x1="0" y1="0" x2="0" y2="1"><stop offset="0" stop-color="#917465"/><stop offset="1" stop-color="#785d50"/></linearGradient>
<linearGradient id="dwall" x1="0" y1="0" x2="0" y2="1"><stop offset="0" stop-color="#3f372d"/><stop offset=".35" stop-color="#2c2821"/><stop offset="1" stop-color="#1f1f19"/></linearGradient>
<filter id="b1"><feGaussianBlur stdDeviation="0.6"/></filter>
<filter id="b3"><feGaussianBlur stdDeviation="3"/></filter>
<filter id="b5"><feGaussianBlur stdDeviation="5"/></filter>
<filter id="b9"><feGaussianBlur stdDeviation="10"/></filter>
<filter id="tex" x="0" y="0" width="100%" height="100%"><feTurbulence type="fractalNoise" baseFrequency="0.22 0.3" numOctaves="3" seed="7" result="n"/><feColorMatrix in="n" type="matrix" values="0 0 0 0 0  0 0 0 0 0  0 0 0 0 0  1.6 0 0 0 -0.62"/><feComposite in2="SourceGraphic" operator="in"/></filter>
<filter id="tex2" x="0" y="0" width="100%" height="100%"><feTurbulence type="fractalNoise" baseFrequency="0.16 0.22" numOctaves="3" seed="3" result="n"/><feColorMatrix in="n" type="matrix" values="0 0 0 0 1  0 0 0 0 1  0 0 0 0 .5  0 1.7 0 0 -0.7"/><feComposite in2="SourceGraphic" operator="in"/></filter>
<clipPath id="hillc"><path d="M0 104Q14 102 27 108Q48 112 65 122Q80 130 89 141Q98 146 108 142Q122 146 135 154Q160 160 190 157Q204 162 217 171Q230 176 244 179Q256 184 271 190L310 204V232H0Z"/></clipPath>
</defs>
<rect width="520" height="240" fill="url(#sky)"/>
<g filter="url(#b9)">
<ellipse cx="40" cy="20" rx="150" ry="40" fill="#33606f" opacity=".35"/>
<ellipse cx="500" cy="30" rx="100" ry="50" fill="#3a6c7c" opacity=".35"/>
<ellipse cx="415" cy="93" rx="125" ry="9" fill="#a4c4cd" opacity=".75" transform="rotate(14 415 93)"/>
<ellipse cx="330" cy="70" rx="70" ry="6" fill="#7aa9b7" opacity=".5" transform="rotate(10 330 70)"/>
<ellipse cx="400" cy="148" rx="150" ry="16" fill="#d0dfe3" opacity=".85" transform="rotate(5 400 148)"/>
<ellipse cx="170" cy="139" rx="100" ry="9" fill="#b8d2d9" opacity=".8" transform="rotate(7 170 139)"/>
<ellipse cx="250" cy="178" rx="190" ry="14" fill="#c6d9dd" opacity=".8"/>
<ellipse cx="460" cy="190" rx="110" ry="16" fill="#d6e2e4" opacity=".85"/>
<ellipse cx="470" cy="125" rx="80" ry="10" fill="#6f9fae" opacity=".5" transform="rotate(10 470 125)"/>
</g>
<g filter="url(#b1)">
<path d="M366 196Q376 186 392 191Q408 196 422 196Q440 196 455 193Q480 188 520 190V224H366Z" fill="#3c524d"/>
<path d="M366 196Q376 186 392 191Q404 195 414 196V212H366Z" fill="#6f8985" opacity=".75"/>
<rect x="406" y="221" width="114" height="11" fill="#b3c3c7"/>
<rect x="406" y="230.6" width="114" height="3" fill="#4f5c50"/>
</g>
<g clip-path="url(#hillc)">
<rect x="0" y="100" width="320" height="140" fill="url(#hill)"/>
<g filter="url(#b3)">
<ellipse cx="30" cy="190" rx="52" ry="42" fill="#2f4a1e" opacity=".9"/>
<ellipse cx="60" cy="140" rx="40" ry="16" fill="#755a36" opacity=".6" transform="rotate(25 60 140)"/>
<ellipse cx="110" cy="176" rx="40" ry="14" fill="#6e6838" opacity=".6" transform="rotate(18 110 176)"/>
<ellipse cx="95" cy="210" rx="50" ry="16" fill="#365226" opacity=".8"/>
<ellipse cx="200" cy="186" rx="50" ry="12" fill="#5c6a3a" opacity=".6" transform="rotate(12 200 186)"/>
<ellipse cx="250" cy="205" rx="50" ry="12" fill="#44644a" opacity=".8"/>
<ellipse cx="20" cy="120" rx="30" ry="10" fill="#6a6636" opacity=".6"/>
</g>
<rect x="0" y="100" width="320" height="140" fill="#1e3315" filter="url(#tex)" opacity=".7"/>
</g>
<g>
<rect x="57" y="209.6" width="267" height="28" fill="url(#dwall)"/>
<rect x="57" y="201" width="6.5" height="12" fill="#2a2720"/>
<path d="M323.7 208H411.7V231L351 241H323.7Z" fill="url(#wall)"/>
<rect x="323.7" y="207.4" width="88" height="3.4" fill="#6c5044"/>
<path d="M333 212V238M345 212V240M357 212V239M369 212V237M381 212V235M393 212V233M404 212V232" stroke="#6a4c40" stroke-width="2.4" opacity=".55"/>
<rect x="319" y="195" width="7.5" height="46" fill="#3b3029"/>
<path d="M372 206l2-4 2 4zM384 206l2-4 2 4zM396 206l2-4 2 4zM406 206l2-5 2 5z" fill="#26231e"/>
</g>
<g>
<path d="M139.5 210V172L142 163L145 157L148.4 152.6L152 157L155 163L157.5 172V210Z" fill="#6f594f"/>
<path d="M143 210V172L148.4 158L154 172V210Z" fill="#86695c"/>
<path d="M145.8 210V199Q148.4 195 151 199V210Z" fill="#2b221e"/>
<path d="M109 210V184Q109 177.6 117 177Q125 177.6 125 184V210Z" fill="#695249"/>
<path d="M112 183H122V192H112Z" fill="#7d6257"/>
<path d="M114 210V199Q117 195.6 120 199V210Z" fill="#271f1b"/>
<path d="M169.6 210V188L172 184L176 180.6L180 184L182.4 188V210Z" fill="#6e574d"/>
<path d="M174 210V201Q176 198.6 178 201V210Z" fill="#271f1b"/>
<path d="M130 210V194L133.6 190L137 194V210Z" fill="#5f463d"/>
<path d="M160 210V198L163 195L166 198V210Z" fill="#4c3a33"/>
<path d="M207.6 210V196H209.6V192L208 190.6Q212 186 216 190.6L214.4 192V196H216.4V210Z" fill="#2a2722"/>
<rect x="72" y="198" width="1.6" height="12" fill="#45443c"/>
<rect x="90" y="203" width="3" height="7" fill="#40322c"/>
</g>
<g><rect x="278.5" y="129.6" width="9.0" height="56.5" fill="#23231f"/><path d="M274.0 133.0C274.2 127.3 278.5 122.5 283.0 122.5C287.5 122.5 291.8 127.3 292.0 133.0Q283.0 135.8 274.0 133.0Z" fill="#23231f"/><path d="M274.4 132.7C274.9 127.6 278.9 123.0 282.6 123.0Q278.5 128.2 278.1 132.8Z" fill="#50453a" opacity=".6"/><path d="M269.5 147.1C269.8 141.4 276.2 136.6 283.0 136.6C289.8 136.6 296.2 141.4 296.5 147.1Q283.0 149.9 269.5 147.1Z" fill="#23231f"/><path d="M270.0 146.8C270.9 141.7 276.9 137.1 282.3 137.1Q276.2 142.3 275.6 146.9Z" fill="#50453a" opacity=".6"/><path d="M265.0 161.2C265.4 155.6 274.0 150.8 283.0 150.8C292.0 150.8 300.6 155.6 301.0 161.2Q283.0 164.0 265.0 161.2Z" fill="#23231f"/><path d="M265.7 160.9C266.8 155.8 274.9 151.2 282.1 151.2Q274.0 156.4 273.1 161.0Z" fill="#50453a" opacity=".6"/><path d="M260.5 175.3C260.9 169.7 271.8 164.9 283.0 164.9C294.2 164.9 305.1 169.7 305.5 175.3Q283.0 178.2 260.5 175.3Z" fill="#23231f"/><path d="M261.4 175.0C262.8 170.0 272.9 165.4 281.9 165.4Q271.8 170.5 270.6 175.1Z" fill="#50453a" opacity=".6"/><path d="M283 115.4L284.3 123.1H281.7Z" fill="#23231f"/><path d="M246.6 197.6Q262 190 270 181H297Q306 190 320 197.6Q283 203 246.6 197.6Z" fill="#26241f"/><path d="M270 181Q262 190 247 197.4L262 198.4Q270 190 278 181Z" fill="#4a4036" opacity=".6"/><rect x="262" y="199" width="44" height="11" fill="#2e2823"/><rect x="311.0" y="116.1" width="6.4" height="74.0" fill="#23231f"/><path d="M307.8 118.1C307.9 114.8 311.0 112.0 314.2 112.0C317.4 112.0 320.5 114.8 320.6 118.1Q314.2 119.7 307.8 118.1Z" fill="#23231f"/><path d="M308.1 117.8C308.4 115.0 311.3 112.5 313.9 112.5Q311.0 115.3 310.7 117.9Z" fill="#50453a" opacity=".6"/><path d="M306.7 126.3C306.8 123.0 310.4 120.2 314.2 120.2C318.0 120.2 321.6 123.0 321.7 126.3Q314.2 128.0 306.7 126.3Z" fill="#23231f"/><path d="M307.0 126.0C307.4 123.2 310.8 120.7 313.8 120.7Q310.4 123.5 310.1 126.1Z" fill="#50453a" opacity=".6"/><path d="M305.6 134.5C305.7 131.2 309.9 128.4 314.2 128.4C318.5 128.4 322.7 131.2 322.8 134.5Q314.2 136.2 305.6 134.5Z" fill="#23231f"/><path d="M305.9 134.2C306.4 131.4 310.3 128.9 313.8 128.9Q309.9 131.7 309.4 134.3Z" fill="#50453a" opacity=".6"/><path d="M304.4 142.8C304.6 139.5 309.3 136.7 314.2 136.7C319.1 136.7 323.8 139.5 324.0 142.8Q314.2 144.4 304.4 142.8Z" fill="#23231f"/><path d="M304.8 142.5C305.4 139.6 309.8 137.2 313.7 137.2Q309.3 140.0 308.8 142.6Z" fill="#50453a" opacity=".6"/><path d="M303.3 151.0C303.5 147.7 308.8 144.9 314.2 144.9C319.6 144.9 324.9 147.7 325.1 151.0Q314.2 152.6 303.3 151.0Z" fill="#23231f"/><path d="M303.7 150.7C304.4 147.8 309.3 145.4 313.7 145.4Q308.8 148.2 308.2 150.8Z" fill="#50453a" opacity=".6"/><path d="M302.2 159.2C302.4 155.9 308.2 153.1 314.2 153.1C320.2 153.1 326.0 155.9 326.2 159.2Q314.2 160.8 302.2 159.2Z" fill="#23231f"/><path d="M302.7 158.9C303.4 156.1 308.8 153.6 313.6 153.6Q308.2 156.4 307.6 159.0Z" fill="#50453a" opacity=".6"/><path d="M301.1 167.4C301.3 164.1 307.6 161.3 314.2 161.3C320.8 161.3 327.1 164.1 327.3 167.4Q314.2 169.1 301.1 167.4Z" fill="#23231f"/><path d="M301.6 167.1C302.4 164.3 308.3 161.8 313.5 161.8Q307.6 164.6 307.0 167.2Z" fill="#50453a" opacity=".6"/><path d="M299.9 175.6C300.2 172.4 307.1 169.6 314.2 169.6C321.3 169.6 328.2 172.4 328.5 175.6Q314.2 177.3 299.9 175.6Z" fill="#23231f"/><path d="M300.5 175.3C301.4 172.5 307.8 170.1 313.5 170.1Q307.1 172.8 306.3 175.4Z" fill="#50453a" opacity=".6"/><path d="M298.8 183.9C299.1 180.6 306.5 177.8 314.2 177.8C321.9 177.8 329.3 180.6 329.6 183.9Q314.2 185.5 298.8 183.9Z" fill="#23231f"/><path d="M299.4 183.6C300.3 180.7 307.3 178.3 313.4 178.3Q306.5 181.1 305.7 183.7Z" fill="#50453a" opacity=".6"/><path d="M314.2 107.9L315.5 112.6H312.9Z" fill="#23231f"/><rect x="336.1" y="115.2" width="5.8" height="75.0" fill="#23231f"/><path d="M333.2 117.2C333.3 113.8 336.1 111.0 339.0 111.0C341.9 111.0 344.7 113.8 344.8 117.2Q339.0 118.8 333.2 117.2Z" fill="#23231f"/><path d="M333.4 116.9C333.8 114.0 336.4 111.5 338.7 111.5Q336.1 114.3 335.8 117.0Z" fill="#50453a" opacity=".6"/><path d="M332.1 125.5C332.2 122.2 335.5 119.3 339.0 119.3C342.5 119.3 345.8 122.2 345.9 125.5Q339.0 127.2 332.1 125.5Z" fill="#23231f"/><path d="M332.4 125.2C332.8 122.3 335.9 119.8 338.7 119.8Q335.5 122.7 335.2 125.3Z" fill="#50453a" opacity=".6"/><path d="M330.9 133.8C331.1 130.5 335.0 127.7 339.0 127.7C343.0 127.7 346.9 130.5 347.1 133.8Q339.0 135.5 330.9 133.8Z" fill="#23231f"/><path d="M331.3 133.5C331.8 130.7 335.4 128.2 338.6 128.2Q335.0 131.0 334.6 133.6Z" fill="#50453a" opacity=".6"/><path d="M329.8 142.2C330.0 138.8 334.4 136.0 339.0 136.0C343.6 136.0 348.0 138.8 348.2 142.2Q339.0 143.8 329.8 142.2Z" fill="#23231f"/><path d="M330.2 141.9C330.7 139.0 334.9 136.5 338.5 136.5Q334.4 139.3 334.0 142.0Z" fill="#50453a" opacity=".6"/><path d="M328.7 150.5C328.9 147.2 333.9 144.3 339.0 144.3C344.1 144.3 349.1 147.2 349.3 150.5Q339.0 152.2 328.7 150.5Z" fill="#23231f"/><path d="M329.1 150.2C329.7 147.3 334.4 144.8 338.5 144.8Q333.9 147.7 333.3 150.3Z" fill="#50453a" opacity=".6"/><path d="M327.6 158.8C327.8 155.5 333.3 152.7 339.0 152.7C344.7 152.7 350.2 155.5 350.4 158.8Q339.0 160.5 327.6 158.8Z" fill="#23231f"/><path d="M328.0 158.5C328.7 155.7 333.9 153.2 338.4 153.2Q333.3 156.0 332.7 158.6Z" fill="#50453a" opacity=".6"/><path d="M326.4 167.2C326.7 163.8 332.7 161.0 339.0 161.0C345.3 161.0 351.3 163.8 351.6 167.2Q339.0 168.8 326.4 167.2Z" fill="#23231f"/><path d="M327.0 166.9C327.7 164.0 333.4 161.5 338.4 161.5Q332.7 164.3 332.1 167.0Z" fill="#50453a" opacity=".6"/><path d="M325.3 175.5C325.6 172.2 332.2 169.3 339.0 169.3C345.8 169.3 352.4 172.2 352.7 175.5Q339.0 177.2 325.3 175.5Z" fill="#23231f"/><path d="M325.9 175.2C326.7 172.3 332.8 169.8 338.3 169.8Q332.2 172.7 331.5 175.3Z" fill="#50453a" opacity=".6"/><path d="M324.2 183.8C324.5 180.5 331.6 177.7 339.0 177.7C346.4 177.7 353.5 180.5 353.8 183.8Q339.0 185.5 324.2 183.8Z" fill="#23231f"/><path d="M324.8 183.5C325.7 180.7 332.3 178.2 338.3 178.2Q331.6 181.0 330.9 183.6Z" fill="#50453a" opacity=".6"/><path d="M339 106.8L340.3 111.6H337.7Z" fill="#23231f"/><path d="M298 198Q310 192 316 186H352Q360 192 372 198Q336 204 298 198Z" fill="#2a2622"/><rect x="306" y="199" width="58" height="9" fill="#5a3f32"/><path d="M310 199V208M322 199V208M334 199V208M346 199V208M358 199V208" stroke="#2a211d" stroke-width="2"/><path d="M363 160L364.2 170L367 178L369.6 186V205H356.4V186L359 178L361.8 170Z" fill="#28251f"/></g><rect y="233" width="520" height="113" fill="url(#grass)"/>
<g filter="url(#b5)">
<ellipse cx="385" cy="236" rx="36" ry="7" fill="#6b9a3a" opacity=".95"/>
<ellipse cx="455" cy="249" rx="85" ry="8" fill="#a6ae50" opacity=".7"/>
<ellipse cx="100" cy="256" rx="135" ry="6" fill="#a0ad4b" opacity=".75"/>
<ellipse cx="30" cy="302" rx="50" ry="12" fill="#446a24" opacity=".7"/>
<ellipse cx="470" cy="320" rx="70" ry="10" fill="#3c5f20" opacity=".6"/>
<ellipse cx="300" cy="318" rx="130" ry="9" fill="#6f9237" opacity=".55"/>
<ellipse cx="485" cy="292" rx="50" ry="7" fill="#7d9a3c" opacity=".5"/>
<ellipse cx="90" cy="330" rx="90" ry="8" fill="#5f8a30" opacity=".5"/>
</g>
<g filter="url(#b3)">
<ellipse cx="155" cy="240" rx="200" ry="8.5" fill="#1f3315"/>
<ellipse cx="275" cy="245" rx="70" ry="6" fill="#2c4619" opacity=".9"/>
<ellipse cx="135" cy="284" rx="80" ry="16" fill="#2a4719" opacity=".95"/>
<ellipse cx="150" cy="269" rx="62" ry="5" fill="#5f8c33" opacity=".85"/>
<ellipse cx="365" cy="271" rx="124" ry="15" fill="#2a4719" opacity=".95"/>
<ellipse cx="290" cy="254" rx="46" ry="6" fill="#355720" opacity=".95"/>
<ellipse cx="400" cy="258" rx="70" ry="4.5" fill="#5f8a32" opacity=".75"/>
</g>
<rect y="236" width="520" height="110" fill="#223a12" filter="url(#tex)" opacity=".5"/>
<rect y="240" width="520" height="106" fill="#fff" filter="url(#tex2)" opacity=".3"/>
</svg>
<div class="t" style="left:1254.20px;top:882px;font-size:17px;color:#66707a;letter-spacing:0.658px;">Sent • now</div>
<svg class="a" style="left:1372.60px;top:186.40px" width="30" height="30" viewBox="-15.000 -15.000 30.000 30.000" ><defs><clipPath id="fb0"><circle r="15"/></clipPath></defs><g clip-path="url(#fb0)"><g transform="scale(1.0)"><rect x="-15" y="-15" width="30" height="30" fill="#e6e8e7"/><path d="M-15 -6Q-9 -10 -6 -4L-7 4L-15 8Z" fill="#d0d4d3"/><path d="M-15 16V6Q-12 1.4 -5.4 0.2L1 6.4L7 0.2Q13 1.6 15 7V16Z" fill="#c9cdd0"/><path d="M-8 16V4M-3.6 16V6M4.6 16V6M9.6 16V3" stroke="#b4babd" stroke-width="1" opacity=".8"/><path d="M-3.4 -1.6H4.8L5.4 1.4L1 7L-3.6 1.4Z" fill="#d7ad92"/><path d="M-5.4 0.2L-3.4 -1L1 6.6L-1.4 8.4ZM7 0.2L5 -1L1 6.6L3.4 8.4Z" fill="#e4e7e8"/><ellipse cx="0.9" cy="-6" rx="5.7" ry="6.7" fill="#e2b69e"/><ellipse cx="-4.9" cy="-6" rx="1" ry="1.7" fill="#d9a88f"/><ellipse cx="6.7" cy="-6" rx="1" ry="1.7" fill="#d9a88f"/><path d="M-4.9 -7.4Q-5.6 -15 1.2 -15Q7.6 -15 6.7 -7.4Q6 -10.8 4.4 -11.4Q0 -10.4 -3.2 -11.6Q-4.4 -10.4 -4.9 -7.4Z" fill="#5a4132"/><ellipse cx="-1.4" cy="-7" rx="1.1" ry=".7" fill="#6a4a3c"/><ellipse cx="3.3" cy="-7" rx="1.1" ry=".7" fill="#6a4a3c"/><path d="M-1.9 -3Q1 -0.6 3.9 -3Q3.2 -1 1 -0.9Q-1.2 -1 -1.9 -3Z" fill="#b78570"/><path d="M-1.2 -2.7Q1 -1.6 3.2 -2.7" stroke="#f3e6df" stroke-width=".7" fill="none"/></g></g></svg>
<svg class="a" style="left:1372.60px;top:409.80px" width="30" height="30" viewBox="-15.000 -15.000 30.000 30.000" ><defs><clipPath id="fb1"><circle r="15"/></clipPath></defs><g clip-path="url(#fb1)"><g transform="scale(1.0)"><rect x="-15" y="-15" width="30" height="30" fill="#e6e8e7"/><path d="M-15 -6Q-9 -10 -6 -4L-7 4L-15 8Z" fill="#d0d4d3"/><path d="M-15 16V6Q-12 1.4 -5.4 0.2L1 6.4L7 0.2Q13 1.6 15 7V16Z" fill="#c9cdd0"/><path d="M-8 16V4M-3.6 16V6M4.6 16V6M9.6 16V3" stroke="#b4babd" stroke-width="1" opacity=".8"/><path d="M-3.4 -1.6H4.8L5.4 1.4L1 7L-3.6 1.4Z" fill="#d7ad92"/><path d="M-5.4 0.2L-3.4 -1L1 6.6L-1.4 8.4ZM7 0.2L5 -1L1 6.6L3.4 8.4Z" fill="#e4e7e8"/><ellipse cx="0.9" cy="-6" rx="5.7" ry="6.7" fill="#e2b69e"/><ellipse cx="-4.9" cy="-6" rx="1" ry="1.7" fill="#d9a88f"/><ellipse cx="6.7" cy="-6" rx="1" ry="1.7" fill="#d9a88f"/><path d="M-4.9 -7.4Q-5.6 -15 1.2 -15Q7.6 -15 6.7 -7.4Q6 -10.8 4.4 -11.4Q0 -10.4 -3.2 -11.6Q-4.4 -10.4 -4.9 -7.4Z" fill="#5a4132"/><ellipse cx="-1.4" cy="-7" rx="1.1" ry=".7" fill="#6a4a3c"/><ellipse cx="3.3" cy="-7" rx="1.1" ry=".7" fill="#6a4a3c"/><path d="M-1.9 -3Q1 -0.6 3.9 -3Q3.2 -1 1 -0.9Q-1.2 -1 -1.9 -3Z" fill="#b78570"/><path d="M-1.2 -2.7Q1 -1.6 3.2 -2.7" stroke="#f3e6df" stroke-width=".7" fill="none"/></g></g></svg>
<svg class="a" style="left:1372.60px;top:877.40px" width="30" height="30" viewBox="-15.000 -15.000 30.000 30.000" ><defs><clipPath id="fb2"><circle r="15"/></clipPath></defs><g clip-path="url(#fb2)"><g transform="scale(1.0)"><rect x="-15" y="-15" width="30" height="30" fill="#e6e8e7"/><path d="M-15 -6Q-9 -10 -6 -4L-7 4L-15 8Z" fill="#d0d4d3"/><path d="M-15 16V6Q-12 1.4 -5.4 0.2L1 6.4L7 0.2Q13 1.6 15 7V16Z" fill="#c9cdd0"/><path d="M-8 16V4M-3.6 16V6M4.6 16V6M9.6 16V3" stroke="#b4babd" stroke-width="1" opacity=".8"/><path d="M-3.4 -1.6H4.8L5.4 1.4L1 7L-3.6 1.4Z" fill="#d7ad92"/><path d="M-5.4 0.2L-3.4 -1L1 6.6L-1.4 8.4ZM7 0.2L5 -1L1 6.6L3.4 8.4Z" fill="#e4e7e8"/><ellipse cx="0.9" cy="-6" rx="5.7" ry="6.7" fill="#e2b69e"/><ellipse cx="-4.9" cy="-6" rx="1" ry="1.7" fill="#d9a88f"/><ellipse cx="6.7" cy="-6" rx="1" ry="1.7" fill="#d9a88f"/><path d="M-4.9 -7.4Q-5.6 -15 1.2 -15Q7.6 -15 6.7 -7.4Q6 -10.8 4.4 -11.4Q0 -10.4 -3.2 -11.6Q-4.4 -10.4 -4.9 -7.4Z" fill="#5a4132"/><ellipse cx="-1.4" cy="-7" rx="1.1" ry=".7" fill="#6a4a3c"/><ellipse cx="3.3" cy="-7" rx="1.1" ry=".7" fill="#6a4a3c"/><path d="M-1.9 -3Q1 -0.6 3.9 -3Q3.2 -1 1 -0.9Q-1.2 -1 -1.9 -3Z" fill="#b78570"/><path d="M-1.2 -2.7Q1 -1.6 3.2 -2.7" stroke="#f3e6df" stroke-width=".7" fill="none"/></g></g></svg>
<div class="a" style="left:730.7px;top:984.5px;width:671.8px;height:184px;background:#fff;border-radius:15px;border:1px solid #cbcbc7;box-sizing:border-box;box-shadow:0 6px 14px rgba(0,0,0,.09),0 2px 4px rgba(0,0,0,.07)"></div>
<svg class="a" style="left:752.10px;top:1124.90px" width="22" height="26" viewBox="-11.000 -13.000 22.000 26.000" ><path d="M2.4 -8.5L-7 1.7H-0.9L-2.6 8.5L7 -2H0.9Z" fill="#1a1a1a" stroke="#1a1a1a" stroke-width="0.9" stroke-linejoin="round"/></svg>
<div class="a" style="left:803.1px;top:1116.8px;width:42px;height:42px;background:#fff;border-radius:21px;border:1.2px solid #9dbcf3;box-sizing:border-box"></div>
<svg class="a" style="left:813.10px;top:1132.80px" width="22" height="10" viewBox="-11.000 -5.000 22.000 10.000" ><circle cx="-6.4" cy="0" r="1.75" fill="#e2541f"/><circle cx="0" cy="0" r="1.75" fill="#e2541f"/><circle cx="6.4" cy="0" r="1.75" fill="#e2541f"/></svg>
<div class="t" style="left:1290.64px;top:1126px;font-size:18px;font-weight:700;color:#8d8d8a;letter-spacing:0.165px;">Send</div>
<svg class="a" style="left:1357.00px;top:1127.40px" width="18" height="18" viewBox="-9.000 -9.000 18.000 18.000" ><path d="M-5 -2.5L0 2.5L5 -2.5" stroke="#6a6a68" stroke-width="2" fill="none" stroke-linecap="round" stroke-linejoin="round"/></svg>
<div class="a" style="left:686.5px;top:848px;width:276px;height:258.6px;background:#fff;border-radius:11px;box-shadow:0 4px 18px rgba(0,0,0,.16),0 0 1px rgba(0,0,0,.18)"></div>
<svg class="a" style="left:705.80px;top:862.60px" width="22" height="26" viewBox="-11.000 -13.000 22.000 26.000" ><path d="M-5.4 -7.6H5.4V8L0 4.4L-5.4 8Z" fill="#1a1a1a" stroke="#1a1a1a" stroke-width="1" stroke-linejoin="round"/></svg>
<div class="t" style="left:739.68px;top:864px;font-size:18px;letter-spacing:1.021px;">Macros</div>
<svg class="a" style="left:913.50px;top:864.30px" width="26" height="26" viewBox="-13.000 -13.000 26.000 26.000" ><g transform="translate(1.4 -1.4) rotate(45)"><path d="M-8.3 1.6H8.3L3.9 -3.4V-8Q3.9 -9.8 2.1 -9.8H-2.1Q-3.9 -9.8 -3.9 -8V-3.4Z" stroke="#4f4f4f" stroke-width="1.9" fill="none" stroke-linejoin="round"/><path d="M0 1.6V9.4" stroke="#4f4f4f" stroke-width="1.9" stroke-linecap="round"/></g></svg>
<svg class="a" style="left:705.80px;top:903.40px" width="22" height="26" viewBox="-11.000 -13.000 22.000 26.000" ><circle r="8.6" fill="#1a1a1a"/><circle cx="-3" cy="-2.4" r="1.35" fill="#fff"/><circle cx="3" cy="-2.4" r="1.35" fill="#fff"/><path d="M-4.6 1.6H4.6Q4 6 0 6Q-4 6 -4.6 1.6Z" fill="#fff"/></svg>
<div class="t" style="left:739.68px;top:905px;font-size:18px;letter-spacing:0.441px;">Emojis</div>
<svg class="a" style="left:913.50px;top:905.10px" width="26" height="26" viewBox="-13.000 -13.000 26.000 26.000" ><g transform="translate(1.4 -1.4) rotate(45)"><path d="M-8.3 1.6H8.3L3.9 -3.4V-8Q3.9 -9.8 2.1 -9.8H-2.1Q-3.9 -9.8 -3.9 -8V-3.4Z" stroke="#4f4f4f" stroke-width="1.9" fill="none" stroke-linejoin="round"/><path d="M0 1.6V9.4" stroke="#4f4f4f" stroke-width="1.9" stroke-linecap="round"/></g></svg>
<svg class="a" style="left:705.80px;top:944.20px" width="22" height="26" viewBox="-11.000 -13.000 22.000 26.000" ><rect x="-8" y="-6" width="16" height="12" rx="1.2" stroke="#1a1a1a" stroke-width="2" fill="#fff"/><path d="M-8 5.6V2.2L-3.6 -1.6L0.6 2L3 0.2L8 3.6V5.6Z" fill="#1a1a1a"/><circle cx="4" cy="-2.4" r="1.3" fill="#1a1a1a"/></svg>
<div class="t" style="left:739.49px;top:946px;font-size:18px;letter-spacing:0.659px;">Images</div>
<svg class="a" style="left:913.50px;top:945.90px" width="26" height="26" viewBox="-13.000 -13.000 26.000 26.000" ><g transform="translate(1.4 -1.4) rotate(45)"><path d="M-8.3 1.6H8.3L3.9 -3.4V-8Q3.9 -9.8 2.1 -9.8H-2.1Q-3.9 -9.8 -3.9 -8V-3.4Z" stroke="#4f4f4f" stroke-width="1.9" fill="none" stroke-linejoin="round"/><path d="M0 1.6V9.4" stroke="#4f4f4f" stroke-width="1.9" stroke-linecap="round"/></g></svg>
<svg class="a" style="left:705.80px;top:985.00px" width="22" height="26" viewBox="-11.000 -13.000 22.000 26.000" ><rect x="-9" y="-6.6" width="18" height="13.2" rx="1.6" fill="#1a1a1a"/><path d="M-5.2 3.4L-2.5 -3.4L0.2 3.4M-4.2 1.2H-0.8M3.6 -3.4V3.4" stroke="#fff" stroke-width="1.7" fill="none" stroke-linejoin="round"/></svg>
<div class="t" style="left:740.97px;top:987px;font-size:18px;letter-spacing:0.395px;">AI Compose</div>
<svg class="a" style="left:913.50px;top:986.70px" width="26" height="26" viewBox="-13.000 -13.000 26.000 26.000" ><g transform="translate(1.4 -1.4) rotate(45)"><path d="M-8.3 1.6H8.3L3.9 -3.4V-8Q3.9 -9.8 2.1 -9.8H-2.1Q-3.9 -9.8 -3.9 -8V-3.4Z" stroke="#4f4f4f" stroke-width="1.9" fill="none" stroke-linejoin="round"/><path d="M0 1.6V9.4" stroke="#4f4f4f" stroke-width="1.9" stroke-linecap="round"/></g></svg>
<svg class="a" style="left:705.80px;top:1025.60px" width="22" height="26" viewBox="-11.000 -13.000 22.000 26.000" ><rect x="-9" y="-6.6" width="18" height="13.2" rx="1.6" fill="#1a1a1a"/><path d="M-5.2 3.4L-2.5 -3.4L0.2 3.4M-4.2 1.2H-0.8M3.6 -3.4V3.4" stroke="#fff" stroke-width="1.7" fill="none" stroke-linejoin="round"/></svg>
<div class="t" style="left:740.10px;top:1027px;font-size:18px;letter-spacing:0.599px;">Copilot suggestions</div>
<svg class="a" style="left:913.50px;top:1027.30px" width="26" height="26" viewBox="-13.000 -13.000 26.000 26.000" ><g transform="translate(1.4 -1.4) rotate(45)"><path d="M-8.3 1.6H8.3L3.9 -3.4V-8Q3.9 -9.8 2.1 -9.8H-2.1Q-3.9 -9.8 -3.9 -8V-3.4Z" stroke="#4f4f4f" stroke-width="1.9" fill="#4f4f4f" stroke-linejoin="round"/><path d="M0 1.6V9.4" stroke="#4f4f4f" stroke-width="1.9" stroke-linecap="round"/><path d="M-5.6 0.2L-2.3 -3.4V-8" stroke="#fff" stroke-width="1.5" fill="none" stroke-linecap="round"/></g></svg>
<svg class="a" style="left:705.80px;top:1066.20px" width="22" height="26" viewBox="-11.000 -13.000 22.000 26.000" ><rect x="-8.4" y="-10.3" width="12.2" height="4.9" rx="2.45" fill="#1a1a1a"/><path d="M-2.7 -5.6V-1.3Q-2.7 1.3 -0.1 1.3H7.4M4.5 -2.9L8.4 1.3L4.5 5.5" stroke="#1a1a1a" stroke-width="2" fill="none" stroke-linecap="round" stroke-linejoin="round"/></svg>
<div class="t" style="left:740.97px;top:1068px;font-size:18px;letter-spacing:0.828px;">Workflows</div>
<svg class="a" style="left:913.50px;top:1067.90px" width="26" height="26" viewBox="-13.000 -13.000 26.000 26.000" ><g transform="translate(1.4 -1.4) rotate(45)"><path d="M-8.3 1.6H8.3L3.9 -3.4V-8Q3.9 -9.8 2.1 -9.8H-2.1Q-3.9 -9.8 -3.9 -8V-3.4Z" stroke="#4f4f4f" stroke-width="1.9" fill="none" stroke-linejoin="round"/><path d="M0 1.6V9.4" stroke="#4f4f4f" stroke-width="1.9" stroke-linecap="round"/></g></svg>
<div class="a" style="left:1434px;top:84px;width:475.6px;height:1105.6px;background:#fff;border-radius:22px;box-shadow:0 1px 2px rgba(0,0,0,.08),0 0 0 .5px rgba(0,0,0,.03)"></div>
<div class="t" style="left:1463.09px;top:111px;font-size:18px;font-weight:700;letter-spacing:0.280px;">Details</div>
<div class="t" style="left:1553.08px;top:111px;font-size:18px;font-weight:700;color:#72726f;letter-spacing:0.062px;font-weight:600;">Copilot</div>
<div class="a" style="left:1464.4px;top:161.7px;width:58.6px;height:2.3px;background:#e55a2b;border-radius:0px;"></div>
<div class="a" style="left:1434px;top:164px;width:475.6px;height:1px;background:#ebebe7;border-radius:0px;"></div>
<svg class="a" style="left:1817.50px;top:112.60px" width="22" height="22" viewBox="-11.000 -11.000 22.000 22.000" ><path d="M-1 -6.8H-6Q-7.4 -6.8 -7.4 -5.4V5.8Q-7.4 7.2 -6 7.2H5.4Q6.8 7.2 6.8 5.8V1.6" stroke="#1a1a1a" stroke-width="2" fill="none" stroke-linecap="round"/><path d="M2.8 -7.4H7.8V-2.4M7.4 -7L0 0.4" stroke="#1a1a1a" stroke-width="2" fill="none" stroke-linecap="round" stroke-linejoin="round"/></svg>
<svg class="a" style="left:1858.20px;top:113.60px" width="22" height="20" viewBox="-11.000 -10.000 22.000 20.000" ><rect x="-7.6" y="-6.2" width="15.2" height="12.4" rx="1.2" stroke="#1a1a1a" stroke-width="2.1" fill="none"/><rect x="1.6" y="-6.2" width="6" height="12.4" fill="#1a1a1a"/></svg>
<div class="t" style="left:1465.86px;top:185px;font-size:17px;color:#6b6b68;letter-spacing:0.254px;">Assignee</div>
<svg class="a" style="left:1641.20px;top:185.60px" width="20" height="20" viewBox="-10.000 -10.000 20.000 20.000" ><defs><clipPath id="fa2"><circle r="10"/></clipPath></defs><g clip-path="url(#fa2)"><g transform="scale(0.6666666666666666)"><rect x="-15" y="-15" width="30" height="30" fill="#e6e8e7"/><path d="M-15 -6Q-9 -10 -6 -4L-7 4L-15 8Z" fill="#d0d4d3"/><path d="M-15 16V6Q-12 1.4 -5.4 0.2L1 6.4L7 0.2Q13 1.6 15 7V16Z" fill="#c9cdd0"/><path d="M-8 16V4M-3.6 16V6M4.6 16V6M9.6 16V3" stroke="#b4babd" stroke-width="1" opacity=".8"/><path d="M-3.4 -1.6H4.8L5.4 1.4L1 7L-3.6 1.4Z" fill="#d7ad92"/><path d="M-5.4 0.2L-3.4 -1L1 6.6L-1.4 8.4ZM7 0.2L5 -1L1 6.6L3.4 8.4Z" fill="#e4e7e8"/><ellipse cx="0.9" cy="-6" rx="5.7" ry="6.7" fill="#e2b69e"/><ellipse cx="-4.9" cy="-6" rx="1" ry="1.7" fill="#d9a88f"/><ellipse cx="6.7" cy="-6" rx="1" ry="1.7" fill="#d9a88f"/><path d="M-4.9 -7.4Q-5.6 -15 1.2 -15Q7.6 -15 6.7 -7.4Q6 -10.8 4.4 -11.4Q0 -10.4 -3.2 -11.6Q-4.4 -10.4 -4.9 -7.4Z" fill="#5a4132"/><ellipse cx="-1.4" cy="-7" rx="1.1" ry=".7" fill="#6a4a3c"/><ellipse cx="3.3" cy="-7" rx="1.1" ry=".7" fill="#6a4a3c"/><path d="M-1.9 -3Q1 -0.6 3.9 -3Q3.2 -1 1 -0.9Q-1.2 -1 -1.9 -3Z" fill="#b78570"/><path d="M-1.2 -2.7Q1 -1.6 3.2 -2.7" stroke="#f3e6df" stroke-width=".7" fill="none"/></g></g></svg>
<div class="t" style="left:1672.46px;top:185px;font-size:17px;letter-spacing:0.194px;">Alex Smith</div>
<div class="t" style="left:1465.70px;top:225px;font-size:17px;color:#6b6b68;letter-spacing:0.240px;">Team Inbox</div>
<svg class="a" style="left:1639.60px;top:222.60px" width="24" height="26" viewBox="-12.000 -13.000 24.000 26.000" ><ellipse cx="-4.6" cy="8.2" rx="4.2" ry="1.7" fill="#9fb0ba"/><path d="M-6.4 8L-4.4 2.4L-1 4.6L-2.6 8Z" fill="#8ea0ab"/><ellipse cx="0" cy="0.4" rx="8.8" ry="5.4" transform="rotate(40 0 0.4)" fill="#55646f"/><ellipse cx="0.6" cy="-0.2" rx="7.4" ry="4" transform="rotate(40 0.6 -0.2)" fill="#6e7f8b"/><path d="M-3.2 3.6L3.6 -3.4" stroke="#c3ced5" stroke-width="1" stroke-linecap="round"/><path d="M3.4 -8.2A4 4 0 0 1 7 -4.2" stroke="#f2a03a" stroke-width="1.2" fill="none" stroke-linecap="round"/><path d="M4 -10.6A6.4 6.4 0 0 1 9.4 -4.8" stroke="#f6b95c" stroke-width="1.1" fill="none" stroke-linecap="round"/></svg>
<div class="t" style="left:1672.46px;top:225px;font-size:17px;letter-spacing:0.319px;">Admin Support</div>
<div class="a" style="left:1434px;top:267px;width:475.6px;height:1.2px;background:#ececE8;border-radius:0px;"></div>
<svg class="a" style="left:1463.00px;top:289.60px" width="22" height="18" viewBox="-11.000 -9.000 22.000 18.000" ><path d="M-8 -7H8Q9 -7 9 -6V-2.3A2.3 2.3 0 0 0 9 2.3V6Q9 7 8 7H-8Q-9 7 -9 6V2.3A2.3 2.3 0 0 0 -9 -2.3V-6Q-9 -7 -8 -7Z" fill="#1a1a1a"/><rect x="-4.7" y="-1.3" width="9.4" height="2.6" fill="#fff"/></svg>
<div class="t" style="left:1493.77px;top:287px;font-size:17px;font-weight:700;letter-spacing:-0.277px;">Links</div>
<svg class="a" style="left:1860.20px;top:288.40px" width="18" height="18" viewBox="-9.000 -9.000 18.000 18.000" ><path d="M-5 -2.5L0 2.5L5 -2.5" stroke="#1a1a1a" stroke-width="2" fill="none" stroke-linecap="round" stroke-linejoin="round"/></svg>
<div class="t" style="left:1464.50px;top:333px;font-size:17px;color:#6b6b68;letter-spacing:0.368px;">Tracker ticket</div>
<div class="a" style="left:1849px;top:329.4px;width:30px;height:30px;background:#f8f8f6;border-radius:15px;"></div>
<svg class="a" style="left:1854.00px;top:334.40px" width="20" height="20" viewBox="-10.000 -10.000 20.000 20.000" ><path d="M-6.6 0H6.6M0 -6.6V6.6" stroke="#1a1a1a" stroke-width="2" fill="none" stroke-linecap="round"/></svg>
<div class="t" style="left:1463.49px;top:384px;font-size:17px;color:#6b6b68;letter-spacing:0.545px;">Back-office tickets</div>
<div class="a" style="left:1849px;top:380.2px;width:30px;height:30px;background:#f8f8f6;border-radius:15px;"></div>
<svg class="a" style="left:1854.00px;top:385.20px" width="20" height="20" viewBox="-10.000 -10.000 20.000 20.000" ><path d="M-6.6 0H6.6M0 -6.6V6.6" stroke="#1a1a1a" stroke-width="2" fill="none" stroke-linecap="round"/></svg>
<div class="t" style="left:1463.80px;top:435px;font-size:17px;color:#6b6b68;letter-spacing:0.299px;">Side conversations</div>
<div class="a" style="left:1849px;top:430.6px;width:30px;height:30px;background:#f8f8f6;border-radius:15px;"></div>
<svg class="a" style="left:1854.00px;top:435.60px" width="20" height="20" viewBox="-10.000 -10.000 20.000 20.000" ><path d="M-6.6 0H6.6M0 -6.6V6.6" stroke="#1a1a1a" stroke-width="2" fill="none" stroke-linecap="round"/></svg>
<div class="a" style="left:1434px;top:482.2px;width:475.6px;height:1.2px;background:#ececE8;border-radius:0px;"></div>
<svg class="a" style="left:1463.20px;top:502.40px" width="22" height="22" viewBox="-11.000 -11.000 22.000 22.000" ><path d="M-9 -7.4H9V5.4H-5L-9 9Z" fill="#1a1a1a" stroke="#1a1a1a" stroke-width="0.6" stroke-linejoin="round"/><rect x="-5.2" y="-3.8" width="10.6" height="2.1" fill="#fff"/><rect x="-5.2" y="0.2" width="6.4" height="2.1" fill="#fff"/></svg>
<div class="t" style="left:1494.46px;top:502px;font-size:17px;font-weight:700;letter-spacing:-0.121px;">Conversation attributes</div>
<svg class="a" style="left:1860.20px;top:503.00px" width="18" height="18" viewBox="-9.000 -9.000 18.000 18.000" ><path d="M-5 -2.5L0 2.5L5 -2.5" stroke="#1a1a1a" stroke-width="2" fill="none" stroke-linecap="round" stroke-linejoin="round"/></svg>
<div class="t" style="left:1464.49px;top:553px;font-size:17px;color:#6b6b68;letter-spacing:0.500px;">ID</div>
<div class="t" style="left:1642.56px;top:553px;font-size:17px;letter-spacing:0.288px;">215471062845035</div>
<div class="t" style="left:1465.00px;top:593px;font-size:17px;color:#6b6b68;letter-spacing:0.369px;">Company</div>
<div class="a" style="left:1643.6px;top:603.6px;width:16px;height:1.6px;background:#333;border-radius:0px;"></div>
<div class="t" style="left:1464.69px;top:634px;font-size:17px;color:#6b6b68;letter-spacing:0.587px;">Brand</div>
<div class="t" style="left:1642.40px;top:634px;font-size:17px;letter-spacing:0.492px;">SL Mobbin</div>
<div class="t" style="left:1465.00px;top:675px;font-size:17px;color:#6b6b68;letter-spacing:0.473px;">Subject</div>
<div class="t" style="left:1642.60px;top:672px;font-size:17px;color:#6b6b68;letter-spacing:1.120px;">+ Add</div>
<div class="t" style="left:1469.25px;top:728px;font-size:17px;font-weight:700;letter-spacing:-0.083px;">See all</div>
<div class="a" style="left:1464px;top:762px;width:416px;height:1px;background:#e6e6e2;border-radius:0px;"></div>
<div class="t" style="left:1464.90px;top:778px;font-size:17px;color:#6b6b68;letter-spacing:0.565px;">Topics</div>
<div class="a" style="left:1464.6px;top:809.2px;width:30px;height:30px;background:#f8f8f6;border-radius:15px;"></div>
<svg class="a" style="left:1469.60px;top:814.20px" width="20" height="20" viewBox="-10.000 -10.000 20.000 20.000" ><path d="M-6.6 0H6.6M0 -6.6V6.6" stroke="#1a1a1a" stroke-width="2" fill="none" stroke-linecap="round"/></svg>
<div class="a" style="left:1434px;top:860px;width:475.6px;height:1.2px;background:#ececE8;border-radius:0px;"></div>
<div class="a" style="left:1434px;top:922.2px;width:475.6px;height:1.2px;background:#ececE8;border-radius:0px;"></div>
<div class="a" style="left:1434px;top:984.4px;width:475.6px;height:1.2px;background:#ececE8;border-radius:0px;"></div>
<div class="a" style="left:1434px;top:1046.6px;width:475.6px;height:1.2px;background:#ececE8;border-radius:0px;"></div>
<div class="a" style="left:1434px;top:1108.8px;width:475.6px;height:1.2px;background:#ececE8;border-radius:0px;"></div>
<div class="a" style="left:1434px;top:1171px;width:475.6px;height:1.2px;background:#ececE8;border-radius:0px;"></div>
<svg class="a" style="left:1463.00px;top:880.90px" width="22" height="22" viewBox="-11.000 -11.000 22.000 22.000" ><circle cx="0" cy="-5.2" r="3" fill="#1a1a1a"/><path d="M-8 7.8Q-7.6 -0.6 0 -0.6Q7.6 -0.6 8 7.8Z" fill="#1a1a1a"/></svg>
<div class="t" style="left:1494.17px;top:880px;font-size:17px;font-weight:700;letter-spacing:-0.107px;">Lead data</div>
<svg class="a" style="left:1860.20px;top:881.40px" width="18" height="18" viewBox="-9.000 -9.000 18.000 18.000" ><path d="M-5 2.5L0 -2.5L5 2.5" stroke="#1a1a1a" stroke-width="2" fill="none" stroke-linecap="round" stroke-linejoin="round"/></svg>
<svg class="a" style="left:1463.00px;top:942.80px" width="22" height="22" viewBox="-11.000 -11.000 22.000 22.000" ><path d="M-9 -7.4H9V5.4H-5L-9 9Z" fill="#1a1a1a" stroke="#1a1a1a" stroke-width="0.6" stroke-linejoin="round"/><rect x="-5.2" y="-3.8" width="10.6" height="2.1" fill="#fff"/><rect x="-5.2" y="0.2" width="6.4" height="2.1" fill="#fff"/></svg>
<div class="t" style="left:1494.17px;top:942px;font-size:17px;font-weight:700;letter-spacing:-0.146px;">Recent conversations</div>
<svg class="a" style="left:1860.20px;top:943.80px" width="18" height="18" viewBox="-9.000 -9.000 18.000 18.000" ><path d="M-5 2.5L0 -2.5L5 2.5" stroke="#1a1a1a" stroke-width="2" fill="none" stroke-linecap="round" stroke-linejoin="round"/></svg>
<svg class="a" style="left:1463.00px;top:1005.70px" width="22" height="22" viewBox="-11.000 -11.000 22.000 22.000" ><circle cx="0" cy="-5.2" r="3" fill="#1a1a1a"/><path d="M-8 7.8Q-7.6 -0.6 0 -0.6Q7.6 -0.6 8 7.8Z" fill="#1a1a1a"/></svg>
<div class="t" style="left:1494.17px;top:1005px;font-size:17px;font-weight:700;letter-spacing:-0.107px;">Lead notes</div>
<svg class="a" style="left:1860.20px;top:1006.20px" width="18" height="18" viewBox="-9.000 -9.000 18.000 18.000" ><path d="M-5 2.5L0 -2.5L5 2.5" stroke="#1a1a1a" stroke-width="2" fill="none" stroke-linecap="round" stroke-linejoin="round"/></svg>
<svg class="a" style="left:1463.00px;top:1067.90px" width="22" height="22" viewBox="-11.000 -11.000 22.000 22.000" ><circle cx="0" cy="-5.2" r="3" fill="#1a1a1a"/><path d="M-8 7.8Q-7.6 -0.6 0 -0.6Q7.6 -0.6 8 7.8Z" fill="#1a1a1a"/></svg>
<div class="t" style="left:1494.17px;top:1067px;font-size:17px;font-weight:700;letter-spacing:-0.039px;">Lead tags</div>
<svg class="a" style="left:1860.20px;top:1068.40px" width="18" height="18" viewBox="-9.000 -9.000 18.000 18.000" ><path d="M-5 2.5L0 -2.5L5 2.5" stroke="#1a1a1a" stroke-width="2" fill="none" stroke-linecap="round" stroke-linejoin="round"/></svg>
<svg class="a" style="left:1463.00px;top:1130.10px" width="22" height="22" viewBox="-11.000 -11.000 22.000 22.000" ><circle cx="0" cy="-5.2" r="3" fill="#1a1a1a"/><path d="M-8 7.8Q-7.6 -0.6 0 -0.6Q7.6 -0.6 8 7.8Z" fill="#1a1a1a"/></svg>
<div class="t" style="left:1494.17px;top:1129px;font-size:17px;font-weight:700;letter-spacing:-0.064px;">Lead segments</div>
<svg class="a" style="left:1832.00px;top:1111.80px" width="64" height="64" viewBox="-32.000 -32.000 64.000 64.000" ><circle r="30.6" fill="#0a0a0a"/><path d="M-13 -10.6Q-13 -15.2 -8.4 -15.2H8.4Q13 -15.2 13 -10.6V14.6L6.4 10.6H-8.4Q-13 10.6 -13 6Z" fill="#fff"/><path d="M-8.2 3Q0 8.4 8.2 3" stroke="#0a0a0a" stroke-width="1.7" fill="none" stroke-linecap="round"/></svg>
<svg class="a" style="left:427.40px;top:271.40px" width="18" height="18" viewBox="-9.0 -9.0 18 18" ><circle r="7.4" fill="#f5b733"/><path d="M-7 -2.6H7V-0.6Q6.4 2 3.6 2Q1.2 2 0.6 -0.6H-0.6Q-1.2 2 -3.6 2Q-6.4 2 -7 -0.6Z" fill="#2a2620"/><path d="M-3 3.8Q0 5.8 3 3.8" stroke="#7a4a12" stroke-width="1.1" fill="none" stroke-linecap="round"/></svg>
<svg class="a" style="left:443.80px;top:271.20px" width="18" height="18" viewBox="-9.0 -9.0 18 18" ><path d="M-7 -0.4H-3.6V7H-7Z" fill="#e9a02c"/><path d="M-3 -0.6L0.4 -7.4Q3 -7.2 2.4 -3.8L2 -2H6Q7.8 -1.8 7.4 0.4L5.8 5.6Q5.4 7 4 7H-3Z" fill="#f7c144"/></svg>
<svg class="a" style="left:821.60px;top:484.20px" width="18" height="18" viewBox="-9.0 -9.0 18 18" ><circle r="7.4" fill="#f5b733"/><path d="M-7 -2.6H7V-0.6Q6.4 2 3.6 2Q1.2 2 0.6 -0.6H-0.6Q-1.2 2 -3.6 2Q-6.4 2 -7 -0.6Z" fill="#2a2620"/><path d="M-3 3.8Q0 5.8 3 3.8" stroke="#7a4a12" stroke-width="1.1" fill="none" stroke-linecap="round"/></svg>
<svg class="a" style="left:839.40px;top:484.00px" width="18" height="18" viewBox="-9.0 -9.0 18 18" ><path d="M-7 -0.4H-3.6V7H-7Z" fill="#e9a02c"/><path d="M-3 -0.6L0.4 -7.4Q3 -7.2 2.4 -3.8L2 -2H6Q7.8 -1.8 7.4 0.4L5.8 5.6Q5.4 7 4 7H-3Z" fill="#f7c144"/></svg>
<svg class="a" style="left:821.60px;top:259.40px" width="20" height="20" viewBox="-10.0 -10.0 20 20" ><g transform="rotate(-32)"><rect x="-5" y="-1.6" width="10.2" height="9.8" rx="4.2" fill="#f8c33c"/><rect x="-5" y="-7.2" width="2.5" height="8" rx="1.25" fill="#f8c33c"/><rect x="-2.45" y="-8.8" width="2.5" height="9.6" rx="1.25" fill="#f8c33c"/><rect x="0.1" y="-8.4" width="2.5" height="9.2" rx="1.25" fill="#f8c33c"/><rect x="2.65" y="-6.6" width="2.5" height="7.6" rx="1.25" fill="#f8c33c"/><path d="M-2.5 -6V-1M0.05 -7V-1M2.6 -6V-1" stroke="#e2a020" stroke-width=".55"/><path d="M4.6 2.4Q8.4 -1.8 7.4 -4.4Q5.6 -4.8 3.6 0.4Z" fill="#f8c33c" stroke="#e2a020" stroke-width=".4"/></g><path d="M2.2 -8.6Q4 -8 4.8 -6.4M4.2 -9.6Q6.4 -8.6 7 -6.4M-8.8 3.6Q-8.4 5.6 -6.8 6.6M-9.6 5.4Q-8.8 7.6 -6.8 8.4" stroke="#8fa0b8" stroke-width=".9" fill="none" stroke-linecap="round"/></svg>
<svg class="a" style="left:1161.60px;top:307.00px" width="20" height="20" viewBox="-10.0 -10.0 20 20" ><path d="M-8.2 8.4L-3.6 -7.6L7 2.2Z" fill="#f4b63a"/><path d="M-6.6 3.4L-2.4 7.2M-5.2 -1.6L1.6 5.2M-4 -5.6L4.8 3" stroke="#d8484e" stroke-width="1.3"/><circle cx="4.6" cy="-6" r="1.1" fill="#7a6bd8"/><circle cx="7.4" cy="-1" r="1" fill="#3ea8e6"/><path d="M0.6 -8Q2.6 -6 0.8 -3.6M5 -0.6Q7.6 -0.4 8.6 2.2" stroke="#e0704e" stroke-width="1" fill="none"/></svg>
<svg class="a" style="left:964.60px;top:384.80px" width="18" height="18" viewBox="-9.0 -9.0 18 18" ><path d="M1.4 -7.6L2.8 -1.8L7.6 0L2.8 1.8L1.4 7.6L0 1.8L-4.8 0L0 -1.8Z" fill="#f8dc7a"/><path d="M-5.4 -7.4L-4.6 -5L-2.4 -4.2L-4.6 -3.4L-5.4 -1L-6.2 -3.4L-8.4 -4.2L-6.2 -5Z" fill="#f8e08a"/></svg>
<svg class="a" style="left:938.20px;top:163.60px" width="18" height="16" viewBox="-9.0 -8.0 18 16" ><path d="M8.2 -7Q2 -7.2 -1.6 -2.8L-4.2 0.6L-0.8 4L2.6 1.6Q7.6 -1.6 8.2 -7Z" fill="#c9d0d8"/><path d="M8.2 -7Q5.4 -7.2 3.6 -6L7 -2.6Q8.2 -4.4 8.2 -7Z" fill="#d63b30"/><circle cx="3" cy="-2.2" r="1.5" fill="#3f8fd0"/><path d="M-2 -2.6L-5.8 -2.4L-4 0.4ZM2.6 2L2.4 5.8L-0.4 4Z" fill="#d63b30"/><path d="M-3.8 2L-8 6.8L-2 3.8Z" fill="#f6b02c"/><path d="M-3.4 2.6L-6 5.6L-2.6 3.6Z" fill="#f8e05a"/></svg>
</div>
</body></html>
